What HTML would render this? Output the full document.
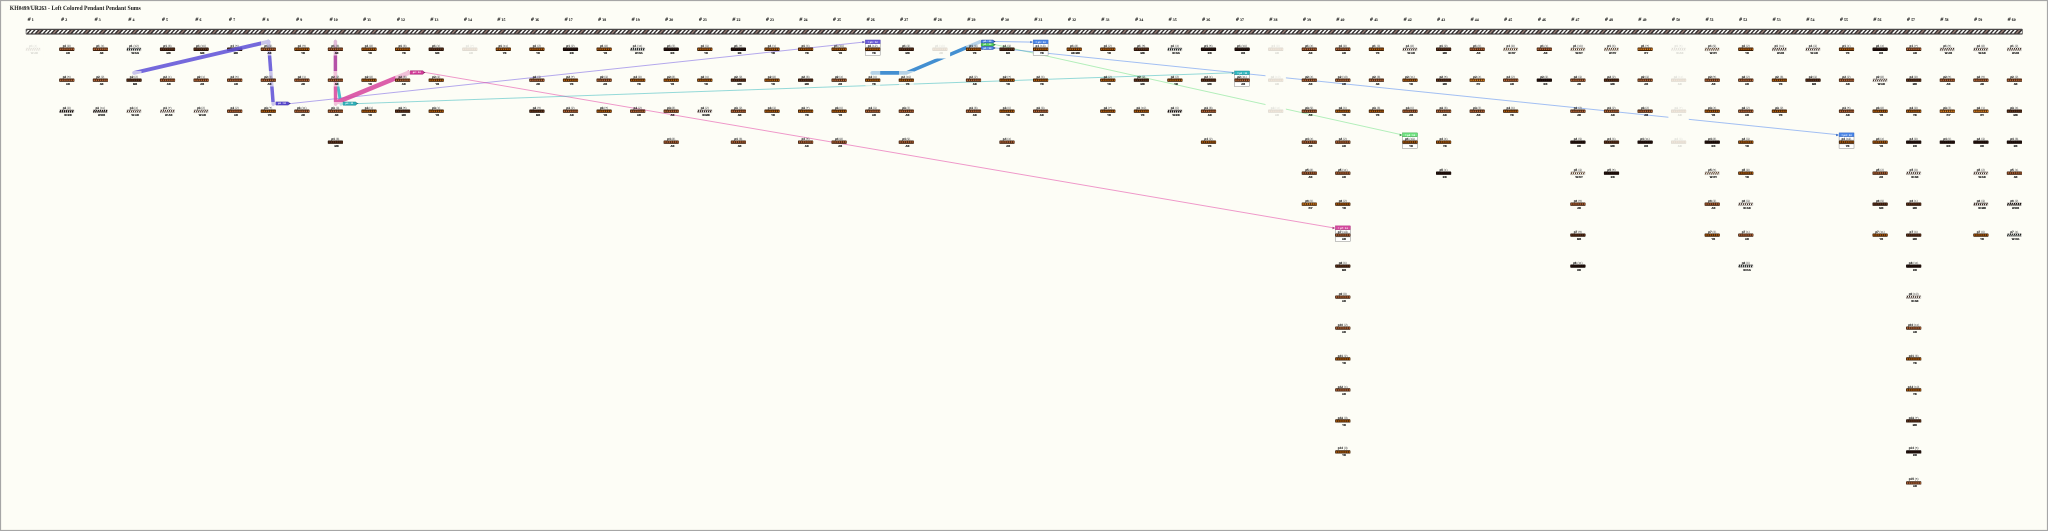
<!DOCTYPE html>
<html lang="en"><head><meta charset="utf-8"><title>KH0499/UR263 - Left Colored Pendant Pendant Sums</title>
<style>html,body{margin:0;padding:0;background:#fdfdf6}body{width:2048px;height:531px;overflow:hidden;position:relative}svg{position:absolute;left:0;top:0;display:block;opacity:.999;will-change:transform;text-rendering:geometricPrecision}text{font-family:"Liberation Sans",sans-serif}.ti{font-family:"Liberation Serif",serif;font-weight:bold;font-size:6.5px;fill:#151515}.cn{font-family:"Liberation Serif",serif;font-weight:bold;font-style:italic;font-size:5.4px;fill:#161616;stroke:#161616;stroke-width:.09}.t{font-size:3.05px;font-weight:bold;fill:#1a1a1a;stroke:#1a1a1a;stroke-width:.07;text-anchor:middle}.t tspan{font-weight:normal;fill:#666;stroke:#666;stroke-width:.06}.n{font-size:2.7px;font-weight:bold;fill:#000;stroke:#000;stroke-width:.12;text-anchor:middle}.h{font-size:2.5px;font-weight:bold;fill:#fff;text-anchor:middle}.b{stroke:#2a1408;stroke-width:.55}.s{stroke:#555;stroke-width:.25}.k{fill:#fdfdf6;fill-opacity:.62}</style></head><body>
<svg width="2048" height="531" viewBox="0 0 2048 531">
<rect x="0" y="0" width="2048" height="531" fill="#fdfdf6"/>
<rect x="0.5" y="0.5" width="2047" height="530" fill="none" stroke="#a6a6a6" stroke-width="1.2"/>
<text class="ti" x="9.8" y="9.9" textLength="131" lengthAdjust="spacingAndGlyphs">KH<tspan font-size="5.9">0499</tspan>/UR<tspan font-size="5.9">263</tspan> - Left Colored Pendant Pendant Sums</text>
<text class="cn" x="27.7" y="21.3"># <tspan font-size="3.9" font-style="normal" stroke-width=".05">1</tspan></text>
<text class="cn" x="61.3" y="21.3"># <tspan font-size="3.9" font-style="normal" stroke-width=".05">2</tspan></text>
<text class="cn" x="94.8" y="21.3"># <tspan font-size="3.9" font-style="normal" stroke-width=".05">3</tspan></text>
<text class="cn" x="128.4" y="21.3"># <tspan font-size="3.9" font-style="normal" stroke-width=".05">4</tspan></text>
<text class="cn" x="161.9" y="21.3"># <tspan font-size="3.9" font-style="normal" stroke-width=".05">5</tspan></text>
<text class="cn" x="195.5" y="21.3"># <tspan font-size="3.9" font-style="normal" stroke-width=".05">6</tspan></text>
<text class="cn" x="229.1" y="21.3"># <tspan font-size="3.9" font-style="normal" stroke-width=".05">7</tspan></text>
<text class="cn" x="262.6" y="21.3"># <tspan font-size="3.9" font-style="normal" stroke-width=".05">8</tspan></text>
<text class="cn" x="296.2" y="21.3"># <tspan font-size="3.9" font-style="normal" stroke-width=".05">9</tspan></text>
<text class="cn" x="329.7" y="21.3"># <tspan font-size="3.9" font-style="normal" stroke-width=".05">10</tspan></text>
<text class="cn" x="363.3" y="21.3"># <tspan font-size="3.9" font-style="normal" stroke-width=".05">11</tspan></text>
<text class="cn" x="396.9" y="21.3"># <tspan font-size="3.9" font-style="normal" stroke-width=".05">12</tspan></text>
<text class="cn" x="430.4" y="21.3"># <tspan font-size="3.9" font-style="normal" stroke-width=".05">13</tspan></text>
<text class="cn" x="464.0" y="21.3"># <tspan font-size="3.9" font-style="normal" stroke-width=".05">14</tspan></text>
<text class="cn" x="497.5" y="21.3"># <tspan font-size="3.9" font-style="normal" stroke-width=".05">15</tspan></text>
<text class="cn" x="531.1" y="21.3"># <tspan font-size="3.9" font-style="normal" stroke-width=".05">16</tspan></text>
<text class="cn" x="564.7" y="21.3"># <tspan font-size="3.9" font-style="normal" stroke-width=".05">17</tspan></text>
<text class="cn" x="598.2" y="21.3"># <tspan font-size="3.9" font-style="normal" stroke-width=".05">18</tspan></text>
<text class="cn" x="631.8" y="21.3"># <tspan font-size="3.9" font-style="normal" stroke-width=".05">19</tspan></text>
<text class="cn" x="665.3" y="21.3"># <tspan font-size="3.9" font-style="normal" stroke-width=".05">20</tspan></text>
<text class="cn" x="698.9" y="21.3"># <tspan font-size="3.9" font-style="normal" stroke-width=".05">21</tspan></text>
<text class="cn" x="732.5" y="21.3"># <tspan font-size="3.9" font-style="normal" stroke-width=".05">22</tspan></text>
<text class="cn" x="766.0" y="21.3"># <tspan font-size="3.9" font-style="normal" stroke-width=".05">23</tspan></text>
<text class="cn" x="799.6" y="21.3"># <tspan font-size="3.9" font-style="normal" stroke-width=".05">24</tspan></text>
<text class="cn" x="833.1" y="21.3"># <tspan font-size="3.9" font-style="normal" stroke-width=".05">25</tspan></text>
<text class="cn" x="866.7" y="21.3"># <tspan font-size="3.9" font-style="normal" stroke-width=".05">26</tspan></text>
<text class="cn" x="900.3" y="21.3"># <tspan font-size="3.9" font-style="normal" stroke-width=".05">27</tspan></text>
<text class="cn" x="933.8" y="21.3"># <tspan font-size="3.9" font-style="normal" stroke-width=".05">28</tspan></text>
<text class="cn" x="967.4" y="21.3"># <tspan font-size="3.9" font-style="normal" stroke-width=".05">29</tspan></text>
<text class="cn" x="1000.9" y="21.3"># <tspan font-size="3.9" font-style="normal" stroke-width=".05">30</tspan></text>
<text class="cn" x="1034.5" y="21.3"># <tspan font-size="3.9" font-style="normal" stroke-width=".05">31</tspan></text>
<text class="cn" x="1068.1" y="21.3"># <tspan font-size="3.9" font-style="normal" stroke-width=".05">32</tspan></text>
<text class="cn" x="1101.6" y="21.3"># <tspan font-size="3.9" font-style="normal" stroke-width=".05">33</tspan></text>
<text class="cn" x="1135.2" y="21.3"># <tspan font-size="3.9" font-style="normal" stroke-width=".05">34</tspan></text>
<text class="cn" x="1168.7" y="21.3"># <tspan font-size="3.9" font-style="normal" stroke-width=".05">35</tspan></text>
<text class="cn" x="1202.3" y="21.3"># <tspan font-size="3.9" font-style="normal" stroke-width=".05">36</tspan></text>
<text class="cn" x="1235.9" y="21.3"># <tspan font-size="3.9" font-style="normal" stroke-width=".05">37</tspan></text>
<text class="cn" x="1269.4" y="21.3"># <tspan font-size="3.9" font-style="normal" stroke-width=".05">38</tspan></text>
<text class="cn" x="1303.0" y="21.3"># <tspan font-size="3.9" font-style="normal" stroke-width=".05">39</tspan></text>
<text class="cn" x="1336.5" y="21.3"># <tspan font-size="3.9" font-style="normal" stroke-width=".05">40</tspan></text>
<text class="cn" x="1370.1" y="21.3"># <tspan font-size="3.9" font-style="normal" stroke-width=".05">41</tspan></text>
<text class="cn" x="1403.7" y="21.3"># <tspan font-size="3.9" font-style="normal" stroke-width=".05">42</tspan></text>
<text class="cn" x="1437.2" y="21.3"># <tspan font-size="3.9" font-style="normal" stroke-width=".05">43</tspan></text>
<text class="cn" x="1470.8" y="21.3"># <tspan font-size="3.9" font-style="normal" stroke-width=".05">44</tspan></text>
<text class="cn" x="1504.3" y="21.3"># <tspan font-size="3.9" font-style="normal" stroke-width=".05">45</tspan></text>
<text class="cn" x="1537.9" y="21.3"># <tspan font-size="3.9" font-style="normal" stroke-width=".05">46</tspan></text>
<text class="cn" x="1571.5" y="21.3"># <tspan font-size="3.9" font-style="normal" stroke-width=".05">47</tspan></text>
<text class="cn" x="1605.0" y="21.3"># <tspan font-size="3.9" font-style="normal" stroke-width=".05">48</tspan></text>
<text class="cn" x="1638.6" y="21.3"># <tspan font-size="3.9" font-style="normal" stroke-width=".05">49</tspan></text>
<text class="cn" x="1672.1" y="21.3"># <tspan font-size="3.9" font-style="normal" stroke-width=".05">50</tspan></text>
<text class="cn" x="1705.7" y="21.3"># <tspan font-size="3.9" font-style="normal" stroke-width=".05">51</tspan></text>
<text class="cn" x="1739.3" y="21.3"># <tspan font-size="3.9" font-style="normal" stroke-width=".05">52</tspan></text>
<text class="cn" x="1772.8" y="21.3"># <tspan font-size="3.9" font-style="normal" stroke-width=".05">53</tspan></text>
<text class="cn" x="1806.4" y="21.3"># <tspan font-size="3.9" font-style="normal" stroke-width=".05">54</tspan></text>
<text class="cn" x="1839.9" y="21.3"># <tspan font-size="3.9" font-style="normal" stroke-width=".05">55</tspan></text>
<text class="cn" x="1873.5" y="21.3"># <tspan font-size="3.9" font-style="normal" stroke-width=".05">56</tspan></text>
<text class="cn" x="1907.1" y="21.3"># <tspan font-size="3.9" font-style="normal" stroke-width=".05">57</tspan></text>
<text class="cn" x="1940.6" y="21.3"># <tspan font-size="3.9" font-style="normal" stroke-width=".05">58</tspan></text>
<text class="cn" x="1974.2" y="21.3"># <tspan font-size="3.9" font-style="normal" stroke-width=".05">59</tspan></text>
<text class="cn" x="2007.7" y="21.3"># <tspan font-size="3.9" font-style="normal" stroke-width=".05">60</tspan></text>
<defs><clipPath id="rc"><rect x="26.1" y="29.1" width="1996.3" height="5.2" rx="0.4"/></clipPath></defs>
<rect x="26.1" y="29.1" width="1996.3" height="5.2" rx="0.4" fill="#322e2e"/>
<path clip-path="url(#rc)" fill="#fcfcfa" d="M24.4 33.4h2.1l3.3-3.3h-2.1zM28.4 33.4h2.1l3.3-3.3h-2.1zM32.4 33.4h2.1l3.3-3.3h-2.1zM40.4 33.4h2.1l3.3-3.3h-2.1zM44.4 33.4h2.1l3.3-3.3h-2.1zM48.3 33.4h2.1l3.3-3.3h-2.1zM56.3 33.4h2.1l3.3-3.3h-2.1zM60.3 33.4h2.1l3.3-3.3h-2.1zM64.3 33.4h2.1l3.3-3.3h-2.1zM72.3 33.4h2.1l3.3-3.3h-2.1zM76.3 33.4h2.1l3.3-3.3h-2.1zM80.3 33.4h2.1l3.3-3.3h-2.1zM88.2 33.4h2.1l3.3-3.3h-2.1zM92.2 33.4h2.1l3.3-3.3h-2.1zM96.2 33.4h2.1l3.3-3.3h-2.1zM104.2 33.4h2.1l3.3-3.3h-2.1zM108.2 33.4h2.1l3.3-3.3h-2.1zM112.2 33.4h2.1l3.3-3.3h-2.1zM120.2 33.4h2.1l3.3-3.3h-2.1zM124.1 33.4h2.1l3.3-3.3h-2.1zM128.1 33.4h2.1l3.3-3.3h-2.1zM136.1 33.4h2.1l3.3-3.3h-2.1zM140.1 33.4h2.1l3.3-3.3h-2.1zM144.1 33.4h2.1l3.3-3.3h-2.1zM152.1 33.4h2.1l3.3-3.3h-2.1zM156.1 33.4h2.1l3.3-3.3h-2.1zM160.1 33.4h2.1l3.3-3.3h-2.1zM168.0 33.4h2.1l3.3-3.3h-2.1zM172.0 33.4h2.1l3.3-3.3h-2.1zM176.0 33.4h2.1l3.3-3.3h-2.1zM184.0 33.4h2.1l3.3-3.3h-2.1zM188.0 33.4h2.1l3.3-3.3h-2.1zM192.0 33.4h2.1l3.3-3.3h-2.1zM200.0 33.4h2.1l3.3-3.3h-2.1zM204.0 33.4h2.1l3.3-3.3h-2.1zM207.9 33.4h2.1l3.3-3.3h-2.1zM215.9 33.4h2.1l3.3-3.3h-2.1zM219.9 33.4h2.1l3.3-3.3h-2.1zM223.9 33.4h2.1l3.3-3.3h-2.1zM231.9 33.4h2.1l3.3-3.3h-2.1zM235.9 33.4h2.1l3.3-3.3h-2.1zM239.9 33.4h2.1l3.3-3.3h-2.1zM247.8 33.4h2.1l3.3-3.3h-2.1zM251.8 33.4h2.1l3.3-3.3h-2.1zM255.8 33.4h2.1l3.3-3.3h-2.1zM263.8 33.4h2.1l3.3-3.3h-2.1zM267.8 33.4h2.1l3.3-3.3h-2.1zM271.8 33.4h2.1l3.3-3.3h-2.1zM279.8 33.4h2.1l3.3-3.3h-2.1zM283.8 33.4h2.1l3.3-3.3h-2.1zM287.7 33.4h2.1l3.3-3.3h-2.1zM295.7 33.4h2.1l3.3-3.3h-2.1zM299.7 33.4h2.1l3.3-3.3h-2.1zM303.7 33.4h2.1l3.3-3.3h-2.1zM311.7 33.4h2.1l3.3-3.3h-2.1zM315.7 33.4h2.1l3.3-3.3h-2.1zM319.7 33.4h2.1l3.3-3.3h-2.1zM327.6 33.4h2.1l3.3-3.3h-2.1zM331.6 33.4h2.1l3.3-3.3h-2.1zM335.6 33.4h2.1l3.3-3.3h-2.1zM343.6 33.4h2.1l3.3-3.3h-2.1zM347.6 33.4h2.1l3.3-3.3h-2.1zM351.6 33.4h2.1l3.3-3.3h-2.1zM359.6 33.4h2.1l3.3-3.3h-2.1zM363.6 33.4h2.1l3.3-3.3h-2.1zM367.5 33.4h2.1l3.3-3.3h-2.1zM375.5 33.4h2.1l3.3-3.3h-2.1zM379.5 33.4h2.1l3.3-3.3h-2.1zM383.5 33.4h2.1l3.3-3.3h-2.1zM391.5 33.4h2.1l3.3-3.3h-2.1zM395.5 33.4h2.1l3.3-3.3h-2.1zM399.5 33.4h2.1l3.3-3.3h-2.1zM407.4 33.4h2.1l3.3-3.3h-2.1zM411.4 33.4h2.1l3.3-3.3h-2.1zM415.4 33.4h2.1l3.3-3.3h-2.1zM423.4 33.4h2.1l3.3-3.3h-2.1zM427.4 33.4h2.1l3.3-3.3h-2.1zM431.4 33.4h2.1l3.3-3.3h-2.1zM439.4 33.4h2.1l3.3-3.3h-2.1zM443.4 33.4h2.1l3.3-3.3h-2.1zM447.3 33.4h2.1l3.3-3.3h-2.1zM455.3 33.4h2.1l3.3-3.3h-2.1zM459.3 33.4h2.1l3.3-3.3h-2.1zM463.3 33.4h2.1l3.3-3.3h-2.1zM471.3 33.4h2.1l3.3-3.3h-2.1zM475.3 33.4h2.1l3.3-3.3h-2.1zM479.3 33.4h2.1l3.3-3.3h-2.1zM487.2 33.4h2.1l3.3-3.3h-2.1zM491.2 33.4h2.1l3.3-3.3h-2.1zM495.2 33.4h2.1l3.3-3.3h-2.1zM503.2 33.4h2.1l3.3-3.3h-2.1zM507.2 33.4h2.1l3.3-3.3h-2.1zM511.2 33.4h2.1l3.3-3.3h-2.1zM519.2 33.4h2.1l3.3-3.3h-2.1zM523.2 33.4h2.1l3.3-3.3h-2.1zM527.1 33.4h2.1l3.3-3.3h-2.1zM535.1 33.4h2.1l3.3-3.3h-2.1zM539.1 33.4h2.1l3.3-3.3h-2.1zM543.1 33.4h2.1l3.3-3.3h-2.1zM551.1 33.4h2.1l3.3-3.3h-2.1zM555.1 33.4h2.1l3.3-3.3h-2.1zM559.1 33.4h2.1l3.3-3.3h-2.1zM567.0 33.4h2.1l3.3-3.3h-2.1zM571.0 33.4h2.1l3.3-3.3h-2.1zM575.0 33.4h2.1l3.3-3.3h-2.1zM583.0 33.4h2.1l3.3-3.3h-2.1zM587.0 33.4h2.1l3.3-3.3h-2.1zM591.0 33.4h2.1l3.3-3.3h-2.1zM599.0 33.4h2.1l3.3-3.3h-2.1zM603.0 33.4h2.1l3.3-3.3h-2.1zM606.9 33.4h2.1l3.3-3.3h-2.1zM614.9 33.4h2.1l3.3-3.3h-2.1zM618.9 33.4h2.1l3.3-3.3h-2.1zM622.9 33.4h2.1l3.3-3.3h-2.1zM630.9 33.4h2.1l3.3-3.3h-2.1zM634.9 33.4h2.1l3.3-3.3h-2.1zM638.9 33.4h2.1l3.3-3.3h-2.1zM646.8 33.4h2.1l3.3-3.3h-2.1zM650.8 33.4h2.1l3.3-3.3h-2.1zM654.8 33.4h2.1l3.3-3.3h-2.1zM662.8 33.4h2.1l3.3-3.3h-2.1zM666.8 33.4h2.1l3.3-3.3h-2.1zM670.8 33.4h2.1l3.3-3.3h-2.1zM678.8 33.4h2.1l3.3-3.3h-2.1zM682.8 33.4h2.1l3.3-3.3h-2.1zM686.7 33.4h2.1l3.3-3.3h-2.1zM694.7 33.4h2.1l3.3-3.3h-2.1zM698.7 33.4h2.1l3.3-3.3h-2.1zM702.7 33.4h2.1l3.3-3.3h-2.1zM710.7 33.4h2.1l3.3-3.3h-2.1zM714.7 33.4h2.1l3.3-3.3h-2.1zM718.7 33.4h2.1l3.3-3.3h-2.1zM726.6 33.4h2.1l3.3-3.3h-2.1zM730.6 33.4h2.1l3.3-3.3h-2.1zM734.6 33.4h2.1l3.3-3.3h-2.1zM742.6 33.4h2.1l3.3-3.3h-2.1zM746.6 33.4h2.1l3.3-3.3h-2.1zM750.6 33.4h2.1l3.3-3.3h-2.1zM758.6 33.4h2.1l3.3-3.3h-2.1zM762.6 33.4h2.1l3.3-3.3h-2.1zM766.5 33.4h2.1l3.3-3.3h-2.1zM774.5 33.4h2.1l3.3-3.3h-2.1zM778.5 33.4h2.1l3.3-3.3h-2.1zM782.5 33.4h2.1l3.3-3.3h-2.1zM790.5 33.4h2.1l3.3-3.3h-2.1zM794.5 33.4h2.1l3.3-3.3h-2.1zM798.5 33.4h2.1l3.3-3.3h-2.1zM806.4 33.4h2.1l3.3-3.3h-2.1zM810.4 33.4h2.1l3.3-3.3h-2.1zM814.4 33.4h2.1l3.3-3.3h-2.1zM822.4 33.4h2.1l3.3-3.3h-2.1zM826.4 33.4h2.1l3.3-3.3h-2.1zM830.4 33.4h2.1l3.3-3.3h-2.1zM838.4 33.4h2.1l3.3-3.3h-2.1zM842.4 33.4h2.1l3.3-3.3h-2.1zM846.3 33.4h2.1l3.3-3.3h-2.1zM854.3 33.4h2.1l3.3-3.3h-2.1zM858.3 33.4h2.1l3.3-3.3h-2.1zM862.3 33.4h2.1l3.3-3.3h-2.1zM870.3 33.4h2.1l3.3-3.3h-2.1zM874.3 33.4h2.1l3.3-3.3h-2.1zM878.3 33.4h2.1l3.3-3.3h-2.1zM886.2 33.4h2.1l3.3-3.3h-2.1zM890.2 33.4h2.1l3.3-3.3h-2.1zM894.2 33.4h2.1l3.3-3.3h-2.1zM902.2 33.4h2.1l3.3-3.3h-2.1zM906.2 33.4h2.1l3.3-3.3h-2.1zM910.2 33.4h2.1l3.3-3.3h-2.1zM918.2 33.4h2.1l3.3-3.3h-2.1zM922.2 33.4h2.1l3.3-3.3h-2.1zM926.1 33.4h2.1l3.3-3.3h-2.1zM934.1 33.4h2.1l3.3-3.3h-2.1zM938.1 33.4h2.1l3.3-3.3h-2.1zM942.1 33.4h2.1l3.3-3.3h-2.1zM950.1 33.4h2.1l3.3-3.3h-2.1zM954.1 33.4h2.1l3.3-3.3h-2.1zM958.1 33.4h2.1l3.3-3.3h-2.1zM966.0 33.4h2.1l3.3-3.3h-2.1zM970.0 33.4h2.1l3.3-3.3h-2.1zM974.0 33.4h2.1l3.3-3.3h-2.1zM982.0 33.4h2.1l3.3-3.3h-2.1zM986.0 33.4h2.1l3.3-3.3h-2.1zM990.0 33.4h2.1l3.3-3.3h-2.1zM998.0 33.4h2.1l3.3-3.3h-2.1zM1002.0 33.4h2.1l3.3-3.3h-2.1zM1005.9 33.4h2.1l3.3-3.3h-2.1zM1013.9 33.4h2.1l3.3-3.3h-2.1zM1017.9 33.4h2.1l3.3-3.3h-2.1zM1021.9 33.4h2.1l3.3-3.3h-2.1zM1029.9 33.4h2.1l3.3-3.3h-2.1zM1033.9 33.4h2.1l3.3-3.3h-2.1zM1037.9 33.4h2.1l3.3-3.3h-2.1zM1045.8 33.4h2.1l3.3-3.3h-2.1zM1049.8 33.4h2.1l3.3-3.3h-2.1zM1053.8 33.4h2.1l3.3-3.3h-2.1zM1061.8 33.4h2.1l3.3-3.3h-2.1zM1065.8 33.4h2.1l3.3-3.3h-2.1zM1069.8 33.4h2.1l3.3-3.3h-2.1zM1077.8 33.4h2.1l3.3-3.3h-2.1zM1081.8 33.4h2.1l3.3-3.3h-2.1zM1085.7 33.4h2.1l3.3-3.3h-2.1zM1093.7 33.4h2.1l3.3-3.3h-2.1zM1097.7 33.4h2.1l3.3-3.3h-2.1zM1101.7 33.4h2.1l3.3-3.3h-2.1zM1109.7 33.4h2.1l3.3-3.3h-2.1zM1113.7 33.4h2.1l3.3-3.3h-2.1zM1117.7 33.4h2.1l3.3-3.3h-2.1zM1125.6 33.4h2.1l3.3-3.3h-2.1zM1129.6 33.4h2.1l3.3-3.3h-2.1zM1133.6 33.4h2.1l3.3-3.3h-2.1zM1141.6 33.4h2.1l3.3-3.3h-2.1zM1145.6 33.4h2.1l3.3-3.3h-2.1zM1149.6 33.4h2.1l3.3-3.3h-2.1zM1157.6 33.4h2.1l3.3-3.3h-2.1zM1161.6 33.4h2.1l3.3-3.3h-2.1zM1165.5 33.4h2.1l3.3-3.3h-2.1zM1173.5 33.4h2.1l3.3-3.3h-2.1zM1177.5 33.4h2.1l3.3-3.3h-2.1zM1181.5 33.4h2.1l3.3-3.3h-2.1zM1189.5 33.4h2.1l3.3-3.3h-2.1zM1193.5 33.4h2.1l3.3-3.3h-2.1zM1197.5 33.4h2.1l3.3-3.3h-2.1zM1205.4 33.4h2.1l3.3-3.3h-2.1zM1209.4 33.4h2.1l3.3-3.3h-2.1zM1213.4 33.4h2.1l3.3-3.3h-2.1zM1221.4 33.4h2.1l3.3-3.3h-2.1zM1225.4 33.4h2.1l3.3-3.3h-2.1zM1229.4 33.4h2.1l3.3-3.3h-2.1zM1237.4 33.4h2.1l3.3-3.3h-2.1zM1241.4 33.4h2.1l3.3-3.3h-2.1zM1245.3 33.4h2.1l3.3-3.3h-2.1zM1253.3 33.4h2.1l3.3-3.3h-2.1zM1257.3 33.4h2.1l3.3-3.3h-2.1zM1261.3 33.4h2.1l3.3-3.3h-2.1zM1269.3 33.4h2.1l3.3-3.3h-2.1zM1273.3 33.4h2.1l3.3-3.3h-2.1zM1277.3 33.4h2.1l3.3-3.3h-2.1zM1285.2 33.4h2.1l3.3-3.3h-2.1zM1289.2 33.4h2.1l3.3-3.3h-2.1zM1293.2 33.4h2.1l3.3-3.3h-2.1zM1301.2 33.4h2.1l3.3-3.3h-2.1zM1305.2 33.4h2.1l3.3-3.3h-2.1zM1309.2 33.4h2.1l3.3-3.3h-2.1zM1317.2 33.4h2.1l3.3-3.3h-2.1zM1321.2 33.4h2.1l3.3-3.3h-2.1zM1325.1 33.4h2.1l3.3-3.3h-2.1zM1333.1 33.4h2.1l3.3-3.3h-2.1zM1337.1 33.4h2.1l3.3-3.3h-2.1zM1341.1 33.4h2.1l3.3-3.3h-2.1zM1349.1 33.4h2.1l3.3-3.3h-2.1zM1353.1 33.4h2.1l3.3-3.3h-2.1zM1357.1 33.4h2.1l3.3-3.3h-2.1zM1365.0 33.4h2.1l3.3-3.3h-2.1zM1369.0 33.4h2.1l3.3-3.3h-2.1zM1373.0 33.4h2.1l3.3-3.3h-2.1zM1381.0 33.4h2.1l3.3-3.3h-2.1zM1385.0 33.4h2.1l3.3-3.3h-2.1zM1389.0 33.4h2.1l3.3-3.3h-2.1zM1397.0 33.4h2.1l3.3-3.3h-2.1zM1401.0 33.4h2.1l3.3-3.3h-2.1zM1404.9 33.4h2.1l3.3-3.3h-2.1zM1412.9 33.4h2.1l3.3-3.3h-2.1zM1416.9 33.4h2.1l3.3-3.3h-2.1zM1420.9 33.4h2.1l3.3-3.3h-2.1zM1428.9 33.4h2.1l3.3-3.3h-2.1zM1432.9 33.4h2.1l3.3-3.3h-2.1zM1436.9 33.4h2.1l3.3-3.3h-2.1zM1444.8 33.4h2.1l3.3-3.3h-2.1zM1448.8 33.4h2.1l3.3-3.3h-2.1zM1452.8 33.4h2.1l3.3-3.3h-2.1zM1460.8 33.4h2.1l3.3-3.3h-2.1zM1464.8 33.4h2.1l3.3-3.3h-2.1zM1468.8 33.4h2.1l3.3-3.3h-2.1zM1476.8 33.4h2.1l3.3-3.3h-2.1zM1480.8 33.4h2.1l3.3-3.3h-2.1zM1484.7 33.4h2.1l3.3-3.3h-2.1zM1492.7 33.4h2.1l3.3-3.3h-2.1zM1496.7 33.4h2.1l3.3-3.3h-2.1zM1500.7 33.4h2.1l3.3-3.3h-2.1zM1508.7 33.4h2.1l3.3-3.3h-2.1zM1512.7 33.4h2.1l3.3-3.3h-2.1zM1516.7 33.4h2.1l3.3-3.3h-2.1zM1524.6 33.4h2.1l3.3-3.3h-2.1zM1528.6 33.4h2.1l3.3-3.3h-2.1zM1532.6 33.4h2.1l3.3-3.3h-2.1zM1540.6 33.4h2.1l3.3-3.3h-2.1zM1544.6 33.4h2.1l3.3-3.3h-2.1zM1548.6 33.4h2.1l3.3-3.3h-2.1zM1556.6 33.4h2.1l3.3-3.3h-2.1zM1560.6 33.4h2.1l3.3-3.3h-2.1zM1564.5 33.4h2.1l3.3-3.3h-2.1zM1572.5 33.4h2.1l3.3-3.3h-2.1zM1576.5 33.4h2.1l3.3-3.3h-2.1zM1580.5 33.4h2.1l3.3-3.3h-2.1zM1588.5 33.4h2.1l3.3-3.3h-2.1zM1592.5 33.4h2.1l3.3-3.3h-2.1zM1596.5 33.4h2.1l3.3-3.3h-2.1zM1604.4 33.4h2.1l3.3-3.3h-2.1zM1608.4 33.4h2.1l3.3-3.3h-2.1zM1612.4 33.4h2.1l3.3-3.3h-2.1zM1620.4 33.4h2.1l3.3-3.3h-2.1zM1624.4 33.4h2.1l3.3-3.3h-2.1zM1628.4 33.4h2.1l3.3-3.3h-2.1zM1636.4 33.4h2.1l3.3-3.3h-2.1zM1640.4 33.4h2.1l3.3-3.3h-2.1zM1644.3 33.4h2.1l3.3-3.3h-2.1zM1652.3 33.4h2.1l3.3-3.3h-2.1zM1656.3 33.4h2.1l3.3-3.3h-2.1zM1660.3 33.4h2.1l3.3-3.3h-2.1zM1668.3 33.4h2.1l3.3-3.3h-2.1zM1672.3 33.4h2.1l3.3-3.3h-2.1zM1676.3 33.4h2.1l3.3-3.3h-2.1zM1684.2 33.4h2.1l3.3-3.3h-2.1zM1688.2 33.4h2.1l3.3-3.3h-2.1zM1692.2 33.4h2.1l3.3-3.3h-2.1zM1700.2 33.4h2.1l3.3-3.3h-2.1zM1704.2 33.4h2.1l3.3-3.3h-2.1zM1708.2 33.4h2.1l3.3-3.3h-2.1zM1716.2 33.4h2.1l3.3-3.3h-2.1zM1720.2 33.4h2.1l3.3-3.3h-2.1zM1724.1 33.4h2.1l3.3-3.3h-2.1zM1732.1 33.4h2.1l3.3-3.3h-2.1zM1736.1 33.4h2.1l3.3-3.3h-2.1zM1740.1 33.4h2.1l3.3-3.3h-2.1zM1748.1 33.4h2.1l3.3-3.3h-2.1zM1752.1 33.4h2.1l3.3-3.3h-2.1zM1756.1 33.4h2.1l3.3-3.3h-2.1zM1764.0 33.4h2.1l3.3-3.3h-2.1zM1768.0 33.4h2.1l3.3-3.3h-2.1zM1772.0 33.4h2.1l3.3-3.3h-2.1zM1780.0 33.4h2.1l3.3-3.3h-2.1zM1784.0 33.4h2.1l3.3-3.3h-2.1zM1788.0 33.4h2.1l3.3-3.3h-2.1zM1796.0 33.4h2.1l3.3-3.3h-2.1zM1800.0 33.4h2.1l3.3-3.3h-2.1zM1803.9 33.4h2.1l3.3-3.3h-2.1zM1811.9 33.4h2.1l3.3-3.3h-2.1zM1815.9 33.4h2.1l3.3-3.3h-2.1zM1819.9 33.4h2.1l3.3-3.3h-2.1zM1827.9 33.4h2.1l3.3-3.3h-2.1zM1831.9 33.4h2.1l3.3-3.3h-2.1zM1835.9 33.4h2.1l3.3-3.3h-2.1zM1843.8 33.4h2.1l3.3-3.3h-2.1zM1847.8 33.4h2.1l3.3-3.3h-2.1zM1851.8 33.4h2.1l3.3-3.3h-2.1zM1859.8 33.4h2.1l3.3-3.3h-2.1zM1863.8 33.4h2.1l3.3-3.3h-2.1zM1867.8 33.4h2.1l3.3-3.3h-2.1zM1875.8 33.4h2.1l3.3-3.3h-2.1zM1879.8 33.4h2.1l3.3-3.3h-2.1zM1883.7 33.4h2.1l3.3-3.3h-2.1zM1891.7 33.4h2.1l3.3-3.3h-2.1zM1895.7 33.4h2.1l3.3-3.3h-2.1zM1899.7 33.4h2.1l3.3-3.3h-2.1zM1907.7 33.4h2.1l3.3-3.3h-2.1zM1911.7 33.4h2.1l3.3-3.3h-2.1zM1915.7 33.4h2.1l3.3-3.3h-2.1zM1923.6 33.4h2.1l3.3-3.3h-2.1zM1927.6 33.4h2.1l3.3-3.3h-2.1zM1931.6 33.4h2.1l3.3-3.3h-2.1zM1939.6 33.4h2.1l3.3-3.3h-2.1zM1943.6 33.4h2.1l3.3-3.3h-2.1zM1947.6 33.4h2.1l3.3-3.3h-2.1zM1955.6 33.4h2.1l3.3-3.3h-2.1zM1959.6 33.4h2.1l3.3-3.3h-2.1zM1963.5 33.4h2.1l3.3-3.3h-2.1zM1971.5 33.4h2.1l3.3-3.3h-2.1zM1975.5 33.4h2.1l3.3-3.3h-2.1zM1979.5 33.4h2.1l3.3-3.3h-2.1zM1987.5 33.4h2.1l3.3-3.3h-2.1zM1991.5 33.4h2.1l3.3-3.3h-2.1zM1995.5 33.4h2.1l3.3-3.3h-2.1zM2003.4 33.4h2.1l3.3-3.3h-2.1zM2007.4 33.4h2.1l3.3-3.3h-2.1zM2011.4 33.4h2.1l3.3-3.3h-2.1zM2019.4 33.4h2.1l3.3-3.3h-2.1zM2023.4 33.4h2.1l3.3-3.3h-2.1z"/>
<path clip-path="url(#rc)" fill="#a08880" d="M36.4 33.4h1.9l3.3-3.3h-1.9zM52.3 33.4h1.9l3.3-3.3h-1.9zM68.3 33.4h1.9l3.3-3.3h-1.9zM84.2 33.4h1.9l3.3-3.3h-1.9zM100.2 33.4h1.9l3.3-3.3h-1.9zM116.2 33.4h1.9l3.3-3.3h-1.9zM132.1 33.4h1.9l3.3-3.3h-1.9zM148.1 33.4h1.9l3.3-3.3h-1.9zM164.1 33.4h1.9l3.3-3.3h-1.9zM180.0 33.4h1.9l3.3-3.3h-1.9zM196.0 33.4h1.9l3.3-3.3h-1.9zM211.9 33.4h1.9l3.3-3.3h-1.9zM227.9 33.4h1.9l3.3-3.3h-1.9zM243.9 33.4h1.9l3.3-3.3h-1.9zM259.8 33.4h1.9l3.3-3.3h-1.9zM275.8 33.4h1.9l3.3-3.3h-1.9zM291.7 33.4h1.9l3.3-3.3h-1.9zM307.7 33.4h1.9l3.3-3.3h-1.9zM323.7 33.4h1.9l3.3-3.3h-1.9zM339.6 33.4h1.9l3.3-3.3h-1.9zM355.6 33.4h1.9l3.3-3.3h-1.9zM371.5 33.4h1.9l3.3-3.3h-1.9zM387.5 33.4h1.9l3.3-3.3h-1.9zM403.5 33.4h1.9l3.3-3.3h-1.9zM419.4 33.4h1.9l3.3-3.3h-1.9zM435.4 33.4h1.9l3.3-3.3h-1.9zM451.3 33.4h1.9l3.3-3.3h-1.9zM467.3 33.4h1.9l3.3-3.3h-1.9zM483.3 33.4h1.9l3.3-3.3h-1.9zM499.2 33.4h1.9l3.3-3.3h-1.9zM515.2 33.4h1.9l3.3-3.3h-1.9zM531.1 33.4h1.9l3.3-3.3h-1.9zM547.1 33.4h1.9l3.3-3.3h-1.9zM563.1 33.4h1.9l3.3-3.3h-1.9zM579.0 33.4h1.9l3.3-3.3h-1.9zM595.0 33.4h1.9l3.3-3.3h-1.9zM610.9 33.4h1.9l3.3-3.3h-1.9zM626.9 33.4h1.9l3.3-3.3h-1.9zM642.9 33.4h1.9l3.3-3.3h-1.9zM658.8 33.4h1.9l3.3-3.3h-1.9zM674.8 33.4h1.9l3.3-3.3h-1.9zM690.7 33.4h1.9l3.3-3.3h-1.9zM706.7 33.4h1.9l3.3-3.3h-1.9zM722.7 33.4h1.9l3.3-3.3h-1.9zM738.6 33.4h1.9l3.3-3.3h-1.9zM754.6 33.4h1.9l3.3-3.3h-1.9zM770.5 33.4h1.9l3.3-3.3h-1.9zM786.5 33.4h1.9l3.3-3.3h-1.9zM802.5 33.4h1.9l3.3-3.3h-1.9zM818.4 33.4h1.9l3.3-3.3h-1.9zM834.4 33.4h1.9l3.3-3.3h-1.9zM850.3 33.4h1.9l3.3-3.3h-1.9zM866.3 33.4h1.9l3.3-3.3h-1.9zM882.3 33.4h1.9l3.3-3.3h-1.9zM898.2 33.4h1.9l3.3-3.3h-1.9zM914.2 33.4h1.9l3.3-3.3h-1.9zM930.1 33.4h1.9l3.3-3.3h-1.9zM946.1 33.4h1.9l3.3-3.3h-1.9zM962.1 33.4h1.9l3.3-3.3h-1.9zM978.0 33.4h1.9l3.3-3.3h-1.9zM994.0 33.4h1.9l3.3-3.3h-1.9zM1009.9 33.4h1.9l3.3-3.3h-1.9zM1025.9 33.4h1.9l3.3-3.3h-1.9zM1041.9 33.4h1.9l3.3-3.3h-1.9zM1057.8 33.4h1.9l3.3-3.3h-1.9zM1073.8 33.4h1.9l3.3-3.3h-1.9zM1089.7 33.4h1.9l3.3-3.3h-1.9zM1105.7 33.4h1.9l3.3-3.3h-1.9zM1121.7 33.4h1.9l3.3-3.3h-1.9zM1137.6 33.4h1.9l3.3-3.3h-1.9zM1153.6 33.4h1.9l3.3-3.3h-1.9zM1169.5 33.4h1.9l3.3-3.3h-1.9zM1185.5 33.4h1.9l3.3-3.3h-1.9zM1201.5 33.4h1.9l3.3-3.3h-1.9zM1217.4 33.4h1.9l3.3-3.3h-1.9zM1233.4 33.4h1.9l3.3-3.3h-1.9zM1249.3 33.4h1.9l3.3-3.3h-1.9zM1265.3 33.4h1.9l3.3-3.3h-1.9zM1281.3 33.4h1.9l3.3-3.3h-1.9zM1297.2 33.4h1.9l3.3-3.3h-1.9zM1313.2 33.4h1.9l3.3-3.3h-1.9zM1329.1 33.4h1.9l3.3-3.3h-1.9zM1345.1 33.4h1.9l3.3-3.3h-1.9zM1361.1 33.4h1.9l3.3-3.3h-1.9zM1377.0 33.4h1.9l3.3-3.3h-1.9zM1393.0 33.4h1.9l3.3-3.3h-1.9zM1408.9 33.4h1.9l3.3-3.3h-1.9zM1424.9 33.4h1.9l3.3-3.3h-1.9zM1440.9 33.4h1.9l3.3-3.3h-1.9zM1456.8 33.4h1.9l3.3-3.3h-1.9zM1472.8 33.4h1.9l3.3-3.3h-1.9zM1488.7 33.4h1.9l3.3-3.3h-1.9zM1504.7 33.4h1.9l3.3-3.3h-1.9zM1520.7 33.4h1.9l3.3-3.3h-1.9zM1536.6 33.4h1.9l3.3-3.3h-1.9zM1552.6 33.4h1.9l3.3-3.3h-1.9zM1568.5 33.4h1.9l3.3-3.3h-1.9zM1584.5 33.4h1.9l3.3-3.3h-1.9zM1600.5 33.4h1.9l3.3-3.3h-1.9zM1616.4 33.4h1.9l3.3-3.3h-1.9zM1632.4 33.4h1.9l3.3-3.3h-1.9zM1648.3 33.4h1.9l3.3-3.3h-1.9zM1664.3 33.4h1.9l3.3-3.3h-1.9zM1680.3 33.4h1.9l3.3-3.3h-1.9zM1696.2 33.4h1.9l3.3-3.3h-1.9zM1712.2 33.4h1.9l3.3-3.3h-1.9zM1728.1 33.4h1.9l3.3-3.3h-1.9zM1744.1 33.4h1.9l3.3-3.3h-1.9zM1760.1 33.4h1.9l3.3-3.3h-1.9zM1776.0 33.4h1.9l3.3-3.3h-1.9zM1792.0 33.4h1.9l3.3-3.3h-1.9zM1807.9 33.4h1.9l3.3-3.3h-1.9zM1823.9 33.4h1.9l3.3-3.3h-1.9zM1839.9 33.4h1.9l3.3-3.3h-1.9zM1855.8 33.4h1.9l3.3-3.3h-1.9zM1871.8 33.4h1.9l3.3-3.3h-1.9zM1887.7 33.4h1.9l3.3-3.3h-1.9zM1903.7 33.4h1.9l3.3-3.3h-1.9zM1919.7 33.4h1.9l3.3-3.3h-1.9zM1935.6 33.4h1.9l3.3-3.3h-1.9zM1951.6 33.4h1.9l3.3-3.3h-1.9zM1967.5 33.4h1.9l3.3-3.3h-1.9zM1983.5 33.4h1.9l3.3-3.3h-1.9zM1999.5 33.4h1.9l3.3-3.3h-1.9zM2015.4 33.4h1.9l3.3-3.3h-1.9z"/>
<rect x="26.1" y="29.1" width="1996.3" height="5.2" rx="0.4" fill="none" stroke="#6a6868" stroke-width="0.75"/>
<path d="M291.2 103.5 L862.5 42.2" fill="none" stroke="#5a40e0" stroke-width="0.90" stroke-opacity="0.50" stroke-linecap="butt" stroke-linejoin="round"/>
<path d="M425.5 72.5 L1332.5 227.7" fill="none" stroke="#e0309c" stroke-width="0.95" stroke-opacity="0.52" stroke-linecap="butt" stroke-linejoin="round"/>
<path d="M358.0 103.6 L1231.8 72.8" fill="none" stroke="#20b0b8" stroke-width="0.95" stroke-opacity="0.50" stroke-linecap="butt" stroke-linejoin="round"/>
<path d="M996.0 41.5 L1031.0 42.1" fill="none" stroke="#3070f0" stroke-width="0.95" stroke-opacity="0.50" stroke-linecap="butt" stroke-linejoin="round"/>
<path d="M996.0 44.8 L1400.0 134.4" fill="none" stroke="#38d858" stroke-width="0.95" stroke-opacity="0.40" stroke-linecap="butt" stroke-linejoin="round"/>
<path d="M996.0 48.0 L1836.0 134.5" fill="none" stroke="#3070f0" stroke-width="0.95" stroke-opacity="0.47" stroke-linecap="butt" stroke-linejoin="round"/>
<path fill="#40200e" stroke="#40200e" stroke-width="1.2" stroke-linejoin="round" d="M59.8 48.2h14.0v2.1h-14.0zM59.8 79.1h14.0v2.1h-14.0zM93.4 48.2h14.0v2.1h-14.0zM93.4 79.1h14.0v2.1h-14.0zM160.5 79.1h14.0v2.1h-14.0zM194.1 79.1h14.0v2.1h-14.0zM227.7 79.1h14.0v2.1h-14.0zM227.7 110.1h14.0v2.1h-14.0zM294.9 79.1h14.0v2.1h-14.0zM294.9 110.1h14.0v2.1h-14.0zM529.9 79.1h14.0v2.1h-14.0zM563.5 110.1h14.0v2.1h-14.0zM597.1 79.1h14.0v2.1h-14.0zM630.7 110.1h14.0v2.1h-14.0zM664.2 110.1h14.0v2.1h-14.0zM664.2 141.1h14.0v2.1h-14.0zM731.4 110.1h14.0v2.1h-14.0zM731.4 141.1h14.0v2.1h-14.0zM798.6 141.1h14.0v2.1h-14.0zM832.1 79.1h14.0v2.1h-14.0zM832.1 141.1h14.0v2.1h-14.0zM865.7 110.1h14.0v2.1h-14.0zM899.3 110.1h14.0v2.1h-14.0zM899.3 141.1h14.0v2.1h-14.0zM966.5 79.1h14.0v2.1h-14.0zM966.5 110.1h14.0v2.1h-14.0zM1000.0 141.1h14.0v2.1h-14.0zM1033.6 110.1h14.0v2.1h-14.0zM1201.5 110.1h14.0v2.1h-14.0zM1302.3 48.2h14.0v2.1h-14.0zM1302.3 79.1h14.0v2.1h-14.0zM1302.3 110.1h14.0v2.1h-14.0zM1302.3 141.1h14.0v2.1h-14.0zM1302.3 172.1h14.0v2.1h-14.0zM1335.8 48.2h14.0v2.1h-14.0zM1335.8 79.1h14.0v2.1h-14.0zM1335.8 141.1h14.0v2.1h-14.0zM1335.8 172.1h14.0v2.1h-14.0zM1335.8 296.0h14.0v2.1h-14.0zM1335.8 327.0h14.0v2.1h-14.0zM1335.8 388.9h14.0v2.1h-14.0zM1369.4 79.1h14.0v2.1h-14.0zM1403.0 110.1h14.0v2.1h-14.0zM1436.6 110.1h14.0v2.1h-14.0zM1470.2 48.2h14.0v2.1h-14.0zM1470.2 110.1h14.0v2.1h-14.0zM1503.7 79.1h14.0v2.1h-14.0zM1537.3 48.2h14.0v2.1h-14.0zM1570.9 79.1h14.0v2.1h-14.0zM1570.9 110.1h14.0v2.1h-14.0zM1570.9 203.1h14.0v2.1h-14.0zM1604.5 110.1h14.0v2.1h-14.0zM1638.1 79.1h14.0v2.1h-14.0zM1638.1 110.1h14.0v2.1h-14.0zM1705.2 79.1h14.0v2.1h-14.0zM1705.2 203.1h14.0v2.1h-14.0zM1738.8 79.1h14.0v2.1h-14.0zM1738.8 110.1h14.0v2.1h-14.0zM1738.8 234.0h14.0v2.1h-14.0zM1839.5 79.1h14.0v2.1h-14.0zM1839.5 110.1h14.0v2.1h-14.0zM1873.1 172.1h14.0v2.1h-14.0zM1906.7 48.2h14.0v2.1h-14.0zM1906.7 327.0h14.0v2.1h-14.0zM1906.7 481.9h14.0v2.1h-14.0zM1940.3 79.1h14.0v2.1h-14.0zM1973.9 79.1h14.0v2.1h-14.0zM2007.4 79.1h14.0v2.1h-14.0zM2007.4 172.1h14.0v2.1h-14.0z"/>
<path fill="none" stroke="#b66636" stroke-width="1.5" stroke-dasharray="1.35 .77" d="M60.0 49.2h14.1M60.0 80.2h14.1M93.6 49.2h14.1M93.6 80.2h14.1M160.7 80.2h14.1M194.3 80.2h14.1M227.9 80.2h14.1M227.9 111.2h14.1M295.1 80.2h14.1M295.1 111.2h14.1M530.1 80.2h14.1M563.7 111.2h14.1M597.3 80.2h14.1M630.9 111.2h14.1M664.4 111.2h14.1M664.4 142.1h14.1M731.6 111.2h14.1M731.6 142.1h14.1M798.8 142.1h14.1M832.3 80.2h14.1M832.3 142.1h14.1M865.9 111.2h14.1M899.5 111.2h14.1M899.5 142.1h14.1M966.7 80.2h14.1M966.7 111.2h14.1M1000.2 142.1h14.1M1033.8 111.2h14.1M1201.7 111.2h14.1M1302.5 49.2h14.1M1302.5 80.2h14.1M1302.5 111.2h14.1M1302.5 142.1h14.1M1302.5 173.1h14.1M1336.0 49.2h14.1M1336.0 80.2h14.1M1336.0 142.1h14.1M1336.0 173.1h14.1M1336.0 297.0h14.1M1336.0 328.0h14.1M1336.0 390.0h14.1M1369.6 80.2h14.1M1403.2 111.2h14.1M1436.8 111.2h14.1M1470.4 49.2h14.1M1470.4 111.2h14.1M1503.9 80.2h14.1M1537.5 49.2h14.1M1571.1 80.2h14.1M1571.1 111.2h14.1M1571.1 204.1h14.1M1604.7 111.2h14.1M1638.3 80.2h14.1M1638.3 111.2h14.1M1705.4 80.2h14.1M1705.4 204.1h14.1M1739.0 80.2h14.1M1739.0 111.2h14.1M1739.0 235.1h14.1M1839.7 80.2h14.1M1839.7 111.2h14.1M1873.3 173.1h14.1M1906.9 49.2h14.1M1906.9 328.0h14.1M1906.9 482.9h14.1M1940.5 80.2h14.1M1974.1 80.2h14.1M2007.6 80.2h14.1M2007.6 173.1h14.1"/>
<path fill="#3c1e06" stroke="#3c1e06" stroke-width="1.2" stroke-linejoin="round" d="M294.9 48.2h14.0v2.1h-14.0zM362.0 48.2h14.0v2.1h-14.0zM362.0 79.1h14.0v2.1h-14.0zM362.0 110.1h14.0v2.1h-14.0zM395.6 48.2h14.0v2.1h-14.0zM429.2 79.1h14.0v2.1h-14.0zM429.2 110.1h14.0v2.1h-14.0zM496.3 48.2h14.0v2.1h-14.0zM529.9 48.2h14.0v2.1h-14.0zM563.5 79.1h14.0v2.1h-14.0zM597.1 48.2h14.0v2.1h-14.0zM597.1 110.1h14.0v2.1h-14.0zM630.7 79.1h14.0v2.1h-14.0zM664.2 79.1h14.0v2.1h-14.0zM697.8 48.2h14.0v2.1h-14.0zM697.8 79.1h14.0v2.1h-14.0zM765.0 48.2h14.0v2.1h-14.0zM765.0 79.1h14.0v2.1h-14.0zM765.0 110.1h14.0v2.1h-14.0zM798.6 48.2h14.0v2.1h-14.0zM798.6 110.1h14.0v2.1h-14.0zM832.1 48.2h14.0v2.1h-14.0zM832.1 110.1h14.0v2.1h-14.0zM1000.0 79.1h14.0v2.1h-14.0zM1000.0 110.1h14.0v2.1h-14.0zM1033.6 79.1h14.0v2.1h-14.0zM1067.2 48.2h14.0v2.1h-14.0zM1100.8 48.2h14.0v2.1h-14.0zM1100.8 79.1h14.0v2.1h-14.0zM1100.8 110.1h14.0v2.1h-14.0zM1134.4 110.1h14.0v2.1h-14.0zM1167.9 79.1h14.0v2.1h-14.0zM1201.5 141.1h14.0v2.1h-14.0zM1335.8 110.1h14.0v2.1h-14.0zM1335.8 203.1h14.0v2.1h-14.0zM1335.8 357.9h14.0v2.1h-14.0zM1335.8 419.9h14.0v2.1h-14.0zM1335.8 450.9h14.0v2.1h-14.0zM1369.4 48.2h14.0v2.1h-14.0zM1369.4 110.1h14.0v2.1h-14.0zM1403.0 79.1h14.0v2.1h-14.0zM1436.6 141.1h14.0v2.1h-14.0zM1503.7 110.1h14.0v2.1h-14.0zM1705.2 110.1h14.0v2.1h-14.0zM1705.2 234.0h14.0v2.1h-14.0zM1738.8 48.2h14.0v2.1h-14.0zM1738.8 141.1h14.0v2.1h-14.0zM1738.8 172.1h14.0v2.1h-14.0zM1772.4 79.1h14.0v2.1h-14.0zM1772.4 110.1h14.0v2.1h-14.0zM1839.5 48.2h14.0v2.1h-14.0zM1873.1 110.1h14.0v2.1h-14.0zM1873.1 141.1h14.0v2.1h-14.0zM1873.1 234.0h14.0v2.1h-14.0zM1906.7 110.1h14.0v2.1h-14.0zM1906.7 357.9h14.0v2.1h-14.0zM1906.7 388.9h14.0v2.1h-14.0zM1973.9 234.0h14.0v2.1h-14.0z"/>
<path fill="none" stroke="#b45e0a" stroke-width="1.5" stroke-dasharray="1.35 .77" d="M295.1 49.2h14.1M362.2 49.2h14.1M362.2 80.2h14.1M362.2 111.2h14.1M395.8 49.2h14.1M429.4 80.2h14.1M429.4 111.2h14.1M496.5 49.2h14.1M530.1 49.2h14.1M563.7 80.2h14.1M597.3 49.2h14.1M597.3 111.2h14.1M630.9 80.2h14.1M664.4 80.2h14.1M698.0 49.2h14.1M698.0 80.2h14.1M765.2 49.2h14.1M765.2 80.2h14.1M765.2 111.2h14.1M798.8 49.2h14.1M798.8 111.2h14.1M832.3 49.2h14.1M832.3 111.2h14.1M1000.2 80.2h14.1M1000.2 111.2h14.1M1033.8 80.2h14.1M1067.4 49.2h14.1M1101.0 49.2h14.1M1101.0 80.2h14.1M1101.0 111.2h14.1M1134.6 111.2h14.1M1168.1 80.2h14.1M1201.7 142.1h14.1M1336.0 111.2h14.1M1336.0 204.1h14.1M1336.0 359.0h14.1M1336.0 421.0h14.1M1336.0 451.9h14.1M1369.6 49.2h14.1M1369.6 111.2h14.1M1403.2 80.2h14.1M1436.8 142.1h14.1M1503.9 111.2h14.1M1705.4 111.2h14.1M1705.4 235.1h14.1M1739.0 49.2h14.1M1739.0 142.1h14.1M1739.0 173.1h14.1M1772.6 80.2h14.1M1772.6 111.2h14.1M1839.7 49.2h14.1M1873.3 111.2h14.1M1873.3 142.1h14.1M1873.3 235.1h14.1M1906.9 111.2h14.1M1906.9 359.0h14.1M1906.9 390.0h14.1M1974.1 235.1h14.1"/>
<path fill="#2a140a" stroke="#2a140a" stroke-width="1.2" stroke-linejoin="round" d="M160.5 48.2h14.0v2.1h-14.0zM194.1 48.2h14.0v2.1h-14.0zM227.7 48.2h14.0v2.1h-14.0zM328.4 141.1h14.0v2.1h-14.0zM395.6 110.1h14.0v2.1h-14.0zM429.2 48.2h14.0v2.1h-14.0zM529.9 110.1h14.0v2.1h-14.0zM731.4 79.1h14.0v2.1h-14.0zM798.6 79.1h14.0v2.1h-14.0zM899.3 48.2h14.0v2.1h-14.0zM1000.0 48.2h14.0v2.1h-14.0zM1134.4 48.2h14.0v2.1h-14.0zM1134.4 79.1h14.0v2.1h-14.0zM1201.5 79.1h14.0v2.1h-14.0zM1335.8 265.0h14.0v2.1h-14.0zM1436.6 48.2h14.0v2.1h-14.0zM1436.6 79.1h14.0v2.1h-14.0zM1570.9 234.0h14.0v2.1h-14.0zM1604.5 79.1h14.0v2.1h-14.0zM1604.5 141.1h14.0v2.1h-14.0zM1806.0 79.1h14.0v2.1h-14.0zM1873.1 203.1h14.0v2.1h-14.0zM1906.7 79.1h14.0v2.1h-14.0zM1906.7 203.1h14.0v2.1h-14.0zM1906.7 234.0h14.0v2.1h-14.0zM1906.7 419.9h14.0v2.1h-14.0zM2007.4 110.1h14.0v2.1h-14.0z"/>
<path fill="none" stroke="#60341a" stroke-width="1.5" stroke-dasharray="1.35 .77" d="M160.7 49.2h14.1M194.3 49.2h14.1M227.9 49.2h14.1M328.6 142.1h14.1M395.8 111.2h14.1M429.4 49.2h14.1M530.1 111.2h14.1M731.6 80.2h14.1M798.8 80.2h14.1M899.5 49.2h14.1M1000.2 49.2h14.1M1134.6 49.2h14.1M1134.6 80.2h14.1M1201.7 80.2h14.1M1336.0 266.1h14.1M1436.8 49.2h14.1M1436.8 80.2h14.1M1571.1 235.1h14.1M1604.7 80.2h14.1M1604.7 142.1h14.1M1806.2 80.2h14.1M1873.3 204.1h14.1M1906.9 80.2h14.1M1906.9 204.1h14.1M1906.9 235.1h14.1M1906.9 421.0h14.1M2007.6 111.2h14.1"/>
<path fill="#130806" stroke="#130806" stroke-width="1.2" stroke-linejoin="round" d="M563.5 48.2h14.0v2.1h-14.0zM664.2 48.2h14.0v2.1h-14.0zM731.4 48.2h14.0v2.1h-14.0zM1201.5 48.2h14.0v2.1h-14.0zM1235.1 48.2h14.0v2.1h-14.0zM1436.6 172.1h14.0v2.1h-14.0zM1537.3 79.1h14.0v2.1h-14.0zM1570.9 141.1h14.0v2.1h-14.0zM1570.9 265.0h14.0v2.1h-14.0zM1604.5 172.1h14.0v2.1h-14.0zM1638.1 141.1h14.0v2.1h-14.0zM1705.2 141.1h14.0v2.1h-14.0zM1873.1 48.2h14.0v2.1h-14.0zM1906.7 141.1h14.0v2.1h-14.0zM1906.7 265.0h14.0v2.1h-14.0zM1906.7 450.9h14.0v2.1h-14.0zM1940.3 141.1h14.0v2.1h-14.0zM1973.9 141.1h14.0v2.1h-14.0zM2007.4 141.1h14.0v2.1h-14.0z"/>
<path fill="none" stroke="#2a140c" stroke-width="1.5" stroke-dasharray="1.35 .77" d="M563.7 49.2h14.1M664.4 49.2h14.1M731.6 49.2h14.1M1201.7 49.2h14.1M1235.3 49.2h14.1M1436.8 173.1h14.1M1537.5 80.2h14.1M1571.1 142.1h14.1M1571.1 266.1h14.1M1604.7 173.1h14.1M1638.3 142.1h14.1M1705.4 142.1h14.1M1873.3 49.2h14.1M1906.9 142.1h14.1M1906.9 266.1h14.1M1906.9 451.9h14.1M1940.5 142.1h14.1M1974.1 142.1h14.1M2007.6 142.1h14.1"/>
<path fill="#4a2608" stroke="#4a2608" stroke-width="1.2" stroke-linejoin="round" d="M1302.3 203.1h14.0v2.1h-14.0zM1470.2 79.1h14.0v2.1h-14.0zM1638.1 48.2h14.0v2.1h-14.0zM1940.3 110.1h14.0v2.1h-14.0zM1973.9 110.1h14.0v2.1h-14.0z"/>
<path fill="none" stroke="#d8801e" stroke-width="1.5" stroke-dasharray="1.35 .77" d="M1302.5 204.1h14.1M1470.4 80.2h14.1M1638.3 49.2h14.1M1940.5 111.2h14.1M1974.1 111.2h14.1"/>
<path fill="#fcfcf8" stroke="#8a8684" stroke-width=".35" d="M127.0 109.7h14v2.9h-14zM160.5 109.7h14v2.9h-14zM194.1 109.7h14v2.9h-14zM1403.0 47.8h14v2.9h-14zM1738.8 202.7h14v2.9h-14zM1772.4 47.8h14v2.9h-14zM1806.0 47.8h14v2.9h-14zM1873.1 78.7h14v2.9h-14zM1906.7 171.7h14v2.9h-14zM1906.7 295.6h14v2.9h-14zM1940.3 47.8h14v2.9h-14zM1973.9 47.8h14v2.9h-14zM1973.9 171.7h14v2.9h-14zM2007.4 47.8h14v2.9h-14z"/>
<path fill="none" stroke="#3c2a20" stroke-width="1.00" d="M127.1 112.4l1-2.5M129.1 112.4l1-2.5M131.2 112.4l1-2.5M133.2 112.4l1-2.5M135.3 112.4l1-2.5M137.3 112.4l1-2.5M139.4 112.4l1-2.5M160.6 112.4l1-2.5M162.7 112.4l1-2.5M164.7 112.4l1-2.5M166.8 112.4l1-2.5M168.8 112.4l1-2.5M170.9 112.4l1-2.5M172.9 112.4l1-2.5M194.2 112.4l1-2.5M196.3 112.4l1-2.5M198.3 112.4l1-2.5M200.4 112.4l1-2.5M202.4 112.4l1-2.5M204.5 112.4l1-2.5M206.5 112.4l1-2.5M1403.1 50.5l1-2.5M1405.1 50.5l1-2.5M1407.2 50.5l1-2.5M1409.2 50.5l1-2.5M1411.3 50.5l1-2.5M1413.3 50.5l1-2.5M1415.4 50.5l1-2.5M1738.9 205.4l1-2.5M1740.9 205.4l1-2.5M1743.0 205.4l1-2.5M1745.0 205.4l1-2.5M1747.1 205.4l1-2.5M1749.1 205.4l1-2.5M1751.2 205.4l1-2.5M1772.5 50.5l1-2.5M1774.5 50.5l1-2.5M1776.6 50.5l1-2.5M1778.6 50.5l1-2.5M1780.7 50.5l1-2.5M1782.7 50.5l1-2.5M1784.8 50.5l1-2.5M1806.1 50.5l1-2.5M1808.1 50.5l1-2.5M1810.2 50.5l1-2.5M1812.2 50.5l1-2.5M1814.3 50.5l1-2.5M1816.3 50.5l1-2.5M1818.4 50.5l1-2.5M1873.2 81.4l1-2.5M1875.3 81.4l1-2.5M1877.3 81.4l1-2.5M1879.4 81.4l1-2.5M1881.4 81.4l1-2.5M1883.5 81.4l1-2.5M1885.5 81.4l1-2.5M1906.8 174.4l1-2.5M1908.8 174.4l1-2.5M1910.9 174.4l1-2.5M1912.9 174.4l1-2.5M1915.0 174.4l1-2.5M1917.0 174.4l1-2.5M1919.1 174.4l1-2.5M1906.8 298.3l1-2.5M1908.8 298.3l1-2.5M1910.9 298.3l1-2.5M1912.9 298.3l1-2.5M1915.0 298.3l1-2.5M1917.0 298.3l1-2.5M1919.1 298.3l1-2.5M1940.4 50.5l1-2.5M1942.4 50.5l1-2.5M1944.5 50.5l1-2.5M1946.5 50.5l1-2.5M1948.6 50.5l1-2.5M1950.6 50.5l1-2.5M1952.7 50.5l1-2.5M1974.0 50.5l1-2.5M1976.0 50.5l1-2.5M1978.1 50.5l1-2.5M1980.1 50.5l1-2.5M1982.2 50.5l1-2.5M1984.2 50.5l1-2.5M1986.3 50.5l1-2.5M1974.0 174.4l1-2.5M1976.0 174.4l1-2.5M1978.1 174.4l1-2.5M1980.1 174.4l1-2.5M1982.2 174.4l1-2.5M1984.2 174.4l1-2.5M1986.3 174.4l1-2.5M2007.5 50.5l1-2.5M2009.6 50.5l1-2.5M2011.6 50.5l1-2.5M2013.7 50.5l1-2.5M2015.7 50.5l1-2.5M2017.8 50.5l1-2.5M2019.8 50.5l1-2.5"/>
<path fill="#fcfcf8" stroke="#8a8684" stroke-width=".35" d="M59.8 109.7h14v2.9h-14zM93.4 109.7h14v2.9h-14zM1167.9 109.7h14v2.9h-14zM2007.4 202.7h14v2.9h-14z"/>
<path fill="none" stroke="#18110e" stroke-width="1.25" d="M59.9 112.4l1-2.5M61.9 112.4l1-2.5M64.0 112.4l1-2.5M66.0 112.4l1-2.5M68.1 112.4l1-2.5M70.2 112.4l1-2.5M72.2 112.4l1-2.5M93.5 112.4l1-2.5M95.5 112.4l1-2.5M97.6 112.4l1-2.5M99.6 112.4l1-2.5M101.7 112.4l1-2.5M103.7 112.4l1-2.5M105.8 112.4l1-2.5M1168.0 112.4l1-2.5M1170.1 112.4l1-2.5M1172.1 112.4l1-2.5M1174.2 112.4l1-2.5M1176.2 112.4l1-2.5M1178.3 112.4l1-2.5M1180.3 112.4l1-2.5M2007.5 205.4l1-2.5M2009.6 205.4l1-2.5M2011.6 205.4l1-2.5M2013.7 205.4l1-2.5M2015.7 205.4l1-2.5M2017.8 205.4l1-2.5M2019.8 205.4l1-2.5"/>
<path fill="#fcfcf8" stroke="#8a8684" stroke-width=".35" d="M127.0 47.8h14v2.9h-14zM630.7 47.8h14v2.9h-14zM1167.9 47.8h14v2.9h-14zM1738.8 264.6h14v2.9h-14zM2007.4 233.6h14v2.9h-14z"/>
<path fill="none" stroke="#1c201e" stroke-width="1.10" d="M127.1 50.5l1-2.5M129.1 50.5l1-2.5M131.2 50.5l1-2.5M133.2 50.5l1-2.5M135.3 50.5l1-2.5M137.3 50.5l1-2.5M139.4 50.5l1-2.5M630.8 50.5l1-2.5M632.8 50.5l1-2.5M634.9 50.5l1-2.5M636.9 50.5l1-2.5M639.0 50.5l1-2.5M641.0 50.5l1-2.5M643.1 50.5l1-2.5M1168.0 50.5l1-2.5M1170.1 50.5l1-2.5M1172.1 50.5l1-2.5M1174.2 50.5l1-2.5M1176.2 50.5l1-2.5M1178.3 50.5l1-2.5M1180.3 50.5l1-2.5M1738.9 267.3l1-2.5M1740.9 267.3l1-2.5M1743.0 267.3l1-2.5M1745.0 267.3l1-2.5M1747.1 267.3l1-2.5M1749.1 267.3l1-2.5M1751.2 267.3l1-2.5M2007.5 236.3l1-2.5M2009.6 236.3l1-2.5M2011.6 236.3l1-2.5M2013.7 236.3l1-2.5M2015.7 236.3l1-2.5M2017.8 236.3l1-2.5M2019.8 236.3l1-2.5"/>
<path fill="#fcfcf8" stroke="#8a8684" stroke-width=".35" d="M697.8 109.7h14v2.9h-14zM1973.9 202.7h14v2.9h-14z"/>
<path fill="none" stroke="#30201a" stroke-width="1.15" d="M697.9 112.4l1-2.5M700.0 112.4l1-2.5M702.0 112.4l1-2.5M704.1 112.4l1-2.5M706.1 112.4l1-2.5M708.2 112.4l1-2.5M710.2 112.4l1-2.5M1974.0 205.4l1-2.5M1976.0 205.4l1-2.5M1978.1 205.4l1-2.5M1980.1 205.4l1-2.5M1982.2 205.4l1-2.5M1984.2 205.4l1-2.5M1986.3 205.4l1-2.5"/>
<path fill="#fcfcf8" stroke="#8a8684" stroke-width=".35" d="M1503.7 47.8h14v2.9h-14zM1570.9 47.8h14v2.9h-14zM1570.9 171.7h14v2.9h-14zM1604.5 47.8h14v2.9h-14zM1705.2 47.8h14v2.9h-14zM1705.2 171.7h14v2.9h-14z"/>
<path fill="none" stroke="#543820" stroke-width="1.00" d="M1503.8 50.5l1-2.5M1505.9 50.5l1-2.5M1507.9 50.5l1-2.5M1510.0 50.5l1-2.5M1512.0 50.5l1-2.5M1514.1 50.5l1-2.5M1516.1 50.5l1-2.5M1571.0 50.5l1-2.5M1573.0 50.5l1-2.5M1575.1 50.5l1-2.5M1577.1 50.5l1-2.5M1579.2 50.5l1-2.5M1581.2 50.5l1-2.5M1583.3 50.5l1-2.5M1571.0 174.4l1-2.5M1573.0 174.4l1-2.5M1575.1 174.4l1-2.5M1577.1 174.4l1-2.5M1579.2 174.4l1-2.5M1581.2 174.4l1-2.5M1583.3 174.4l1-2.5M1604.6 50.5l1-2.5M1606.6 50.5l1-2.5M1608.7 50.5l1-2.5M1610.7 50.5l1-2.5M1612.8 50.5l1-2.5M1614.8 50.5l1-2.5M1616.9 50.5l1-2.5M1705.3 50.5l1-2.5M1707.4 50.5l1-2.5M1709.4 50.5l1-2.5M1711.5 50.5l1-2.5M1713.5 50.5l1-2.5M1715.6 50.5l1-2.5M1717.6 50.5l1-2.5M1705.3 174.4l1-2.5M1707.4 174.4l1-2.5M1709.4 174.4l1-2.5M1711.5 174.4l1-2.5M1713.5 174.4l1-2.5M1715.6 174.4l1-2.5M1717.6 174.4l1-2.5"/>
<text class="t" x="66.7" y="46.7">p1 <tspan>(8)</tspan></text>
<text class="n" x="68.0" y="53.7">AB</text>
<text class="t" x="66.7" y="77.7">p2 <tspan>(5)</tspan></text>
<text class="n" x="68.0" y="84.7">AB</text>
<text class="t" x="66.7" y="108.7">p3 <tspan>(8)</tspan></text>
<text class="n" x="68.0" y="115.7">W:KB</text>
<text class="t" x="100.3" y="46.7">p1 <tspan>(1)</tspan></text>
<text class="n" x="101.6" y="53.7">AB</text>
<text class="t" x="100.3" y="77.7">p2 <tspan>(2)</tspan></text>
<text class="n" x="101.6" y="84.7">AB</text>
<text class="t" x="100.3" y="108.7">p3 <tspan>(11)</tspan></text>
<text class="n" x="101.6" y="115.7">W:KB</text>
<text class="t" x="133.9" y="46.7">p1 <tspan>(12)</tspan></text>
<text class="n" x="135.2" y="53.7">W:GG</text>
<text class="t" x="133.9" y="108.7">p3 <tspan>(4)</tspan></text>
<text class="n" x="135.2" y="115.7">W:AB</text>
<text class="t" x="167.4" y="46.7">p1 <tspan>(8)</tspan></text>
<text class="n" x="168.7" y="53.7">MB</text>
<text class="t" x="167.4" y="77.7">p2 <tspan>(1)</tspan></text>
<text class="n" x="168.7" y="84.7">AB</text>
<text class="t" x="167.4" y="108.7">p3 <tspan>(7)</tspan></text>
<text class="n" x="168.7" y="115.7">W:AB</text>
<text class="t" x="201.0" y="46.7">p1 <tspan>(10)</tspan></text>
<text class="n" x="202.3" y="53.7">MB</text>
<text class="t" x="201.0" y="77.7">p2 <tspan>(1)</tspan></text>
<text class="n" x="202.3" y="84.7">AB</text>
<text class="t" x="201.0" y="108.7">p3 <tspan>(2)</tspan></text>
<text class="n" x="202.3" y="115.7">W:AB</text>
<text class="t" x="234.6" y="46.7">p1 <tspan>(5)</tspan></text>
<text class="n" x="235.9" y="53.7">MB</text>
<text class="t" x="234.6" y="77.7">p2 <tspan>(5)</tspan></text>
<text class="n" x="235.9" y="84.7">AB</text>
<text class="t" x="234.6" y="108.7">p3 <tspan>(2)</tspan></text>
<text class="n" x="235.9" y="115.7">AB</text>
<text class="t" x="301.8" y="46.7">p1 <tspan>(5)</tspan></text>
<text class="n" x="303.1" y="53.7">YB</text>
<text class="t" x="301.8" y="77.7">p2 <tspan>(1)</tspan></text>
<text class="n" x="303.1" y="84.7">AB</text>
<text class="t" x="301.8" y="108.7">p3 <tspan>(11)</tspan></text>
<text class="n" x="303.1" y="115.7">AB</text>
<text class="t" x="335.3" y="139.6">p4 <tspan>(8)</tspan></text>
<text class="n" x="336.6" y="146.6">MB</text>
<text class="t" x="368.9" y="46.7">p1 <tspan>(8)</tspan></text>
<text class="n" x="370.2" y="53.7">YB</text>
<text class="t" x="368.9" y="77.7">p2 <tspan>(8)</tspan></text>
<text class="n" x="370.2" y="84.7">YB</text>
<text class="t" x="368.9" y="108.7">p3 <tspan>(1)</tspan></text>
<text class="n" x="370.2" y="115.7">YB</text>
<text class="t" x="402.5" y="46.7">p1 <tspan>(8)</tspan></text>
<text class="n" x="403.8" y="53.7">YB</text>
<text class="t" x="402.5" y="108.7">p3 <tspan>(5)</tspan></text>
<text class="n" x="403.8" y="115.7">MB</text>
<text class="t" x="436.1" y="46.7">p1 <tspan>(1)</tspan></text>
<text class="n" x="437.4" y="53.7">MB</text>
<text class="t" x="436.1" y="77.7">p2 <tspan>(3)</tspan></text>
<text class="n" x="437.4" y="84.7">YB</text>
<text class="t" x="436.1" y="108.7">p3 <tspan>(1)</tspan></text>
<text class="n" x="437.4" y="115.7">YB</text>
<text class="t" x="503.2" y="46.7">p1 <tspan>(11)</tspan></text>
<text class="n" x="504.5" y="53.7">YB</text>
<text class="t" x="536.8" y="46.7">p1 <tspan>(2)</tspan></text>
<text class="n" x="538.1" y="53.7">YB</text>
<text class="t" x="536.8" y="77.7">p2 <tspan>(3)</tspan></text>
<text class="n" x="538.1" y="84.7">AB</text>
<text class="t" x="536.8" y="108.7">p3 <tspan>(5)</tspan></text>
<text class="n" x="538.1" y="115.7">MB</text>
<text class="t" x="570.4" y="46.7">p1 <tspan>(2)</tspan></text>
<text class="n" x="571.7" y="53.7">KB</text>
<text class="t" x="570.4" y="77.7">p2 <tspan>(7)</tspan></text>
<text class="n" x="571.7" y="84.7">YB</text>
<text class="t" x="570.4" y="108.7">p3 <tspan>(2)</tspan></text>
<text class="n" x="571.7" y="115.7">AB</text>
<text class="t" x="604.0" y="46.7">p1 <tspan>(8)</tspan></text>
<text class="n" x="605.3" y="53.7">YB</text>
<text class="t" x="604.0" y="77.7">p2 <tspan>(3)</tspan></text>
<text class="n" x="605.3" y="84.7">AB</text>
<text class="t" x="604.0" y="108.7">p3 <tspan>(7)</tspan></text>
<text class="n" x="605.3" y="115.7">YB</text>
<text class="t" x="637.6" y="46.7">p1 <tspan>(11)</tspan></text>
<text class="n" x="638.9" y="53.7">W:GG</text>
<text class="t" x="637.6" y="77.7">p2 <tspan>(8)</tspan></text>
<text class="n" x="638.9" y="84.7">YB</text>
<text class="t" x="637.6" y="108.7">p3 <tspan>(2)</tspan></text>
<text class="n" x="638.9" y="115.7">AB</text>
<text class="t" x="671.1" y="46.7">p1 <tspan>(2)</tspan></text>
<text class="n" x="672.4" y="53.7">KB</text>
<text class="t" x="671.1" y="77.7">p2 <tspan>(8)</tspan></text>
<text class="n" x="672.4" y="84.7">YB</text>
<text class="t" x="671.1" y="108.7">p3 <tspan>(8)</tspan></text>
<text class="n" x="672.4" y="115.7">AB</text>
<text class="t" x="671.1" y="139.6">p4 <tspan>(8)</tspan></text>
<text class="n" x="672.4" y="146.6">AB</text>
<text class="t" x="704.7" y="46.7">p1 <tspan>(3)</tspan></text>
<text class="n" x="706.0" y="53.7">YB</text>
<text class="t" x="704.7" y="77.7">p2 <tspan>(4)</tspan></text>
<text class="n" x="706.0" y="84.7">YB</text>
<text class="t" x="704.7" y="108.7">p3 <tspan>(2)</tspan></text>
<text class="n" x="706.0" y="115.7">W:MB</text>
<text class="t" x="738.3" y="46.7">p1 <tspan>(7)</tspan></text>
<text class="n" x="739.6" y="53.7">KB</text>
<text class="t" x="738.3" y="77.7">p2 <tspan>(9)</tspan></text>
<text class="n" x="739.6" y="84.7">MB</text>
<text class="t" x="738.3" y="108.7">p3 <tspan>(2)</tspan></text>
<text class="n" x="739.6" y="115.7">AB</text>
<text class="t" x="738.3" y="139.6">p4 <tspan>(8)</tspan></text>
<text class="n" x="739.6" y="146.6">AB</text>
<text class="t" x="771.9" y="46.7">p1 <tspan>(1)</tspan></text>
<text class="n" x="773.2" y="53.7">YB</text>
<text class="t" x="771.9" y="77.7">p2 <tspan>(8)</tspan></text>
<text class="n" x="773.2" y="84.7">YB</text>
<text class="t" x="771.9" y="108.7">p3 <tspan>(3)</tspan></text>
<text class="n" x="773.2" y="115.7">YB</text>
<text class="t" x="805.5" y="46.7">p1 <tspan>(6)</tspan></text>
<text class="n" x="806.8" y="53.7">YB</text>
<text class="t" x="805.5" y="77.7">p2 <tspan>(8)</tspan></text>
<text class="n" x="806.8" y="84.7">MB</text>
<text class="t" x="805.5" y="108.7">p3 <tspan>(7)</tspan></text>
<text class="n" x="806.8" y="115.7">YB</text>
<text class="t" x="805.5" y="139.6">p4 <tspan>(5)</tspan></text>
<text class="n" x="806.8" y="146.6">AB</text>
<text class="t" x="839.0" y="46.7">p1 <tspan>(10)</tspan></text>
<text class="n" x="840.3" y="53.7">YB</text>
<text class="t" x="839.0" y="77.7">p2 <tspan>(4)</tspan></text>
<text class="n" x="840.3" y="84.7">AB</text>
<text class="t" x="839.0" y="108.7">p3 <tspan>(6)</tspan></text>
<text class="n" x="840.3" y="115.7">YB</text>
<text class="t" x="839.0" y="139.6">p4 <tspan>(8)</tspan></text>
<text class="n" x="840.3" y="146.6">AB</text>
<text class="t" x="872.6" y="108.7">p3 <tspan>(3)</tspan></text>
<text class="n" x="873.9" y="115.7">AB</text>
<text class="t" x="906.2" y="46.7">p1 <tspan>(3)</tspan></text>
<text class="n" x="907.5" y="53.7">MB</text>
<text class="t" x="906.2" y="108.7">p3 <tspan>(2)</tspan></text>
<text class="n" x="907.5" y="115.7">AB</text>
<text class="t" x="906.2" y="139.6">p4 <tspan>(9)</tspan></text>
<text class="n" x="907.5" y="146.6">AB</text>
<text class="t" x="973.4" y="77.7">p2 <tspan>(2)</tspan></text>
<text class="n" x="974.7" y="84.7">AB</text>
<text class="t" x="973.4" y="108.7">p3 <tspan>(8)</tspan></text>
<text class="n" x="974.7" y="115.7">AB</text>
<text class="t" x="1006.9" y="46.7">p1 <tspan>(3)</tspan></text>
<text class="n" x="1008.2" y="53.7">MB</text>
<text class="t" x="1006.9" y="77.7">p2 <tspan>(7)</tspan></text>
<text class="n" x="1008.2" y="84.7">YB</text>
<text class="t" x="1006.9" y="108.7">p3 <tspan>(6)</tspan></text>
<text class="n" x="1008.2" y="115.7">YB</text>
<text class="t" x="1006.9" y="139.6">p4 <tspan>(4)</tspan></text>
<text class="n" x="1008.2" y="146.6">AB</text>
<text class="t" x="1040.5" y="77.7">p2 <tspan>(6)</tspan></text>
<text class="n" x="1041.8" y="84.7">YB</text>
<text class="t" x="1040.5" y="108.7">p3 <tspan>(3)</tspan></text>
<text class="n" x="1041.8" y="115.7">AB</text>
<text class="t" x="1074.1" y="46.7">p1 <tspan>(8)</tspan></text>
<text class="n" x="1075.4" y="53.7">AB:MB</text>
<text class="t" x="1107.7" y="46.7">p1 <tspan>(2)</tspan></text>
<text class="n" x="1109.0" y="53.7">YB</text>
<text class="t" x="1107.7" y="77.7">p2 <tspan>(2)</tspan></text>
<text class="n" x="1109.0" y="84.7">YB</text>
<text class="t" x="1107.7" y="108.7">p3 <tspan>(7)</tspan></text>
<text class="n" x="1109.0" y="115.7">YB</text>
<text class="t" x="1141.3" y="46.7">p1 <tspan>(5)</tspan></text>
<text class="n" x="1142.6" y="53.7">MB</text>
<text class="t" x="1141.3" y="77.7">p2 <tspan>(2)</tspan></text>
<text class="n" x="1142.6" y="84.7">MB</text>
<text class="t" x="1141.3" y="108.7">p3 <tspan>(10)</tspan></text>
<text class="n" x="1142.6" y="115.7">YB</text>
<text class="t" x="1174.8" y="46.7">p1 <tspan>(4)</tspan></text>
<text class="n" x="1176.1" y="53.7">W:GG</text>
<text class="t" x="1174.8" y="77.7">p2 <tspan>(2)</tspan></text>
<text class="n" x="1176.1" y="84.7">YB</text>
<text class="t" x="1174.8" y="108.7">p3 <tspan>(6)</tspan></text>
<text class="n" x="1176.1" y="115.7">W:KB</text>
<text class="t" x="1208.4" y="46.7">p1 <tspan>(5)</tspan></text>
<text class="n" x="1209.7" y="53.7">KB</text>
<text class="t" x="1208.4" y="77.7">p2 <tspan>(1)</tspan></text>
<text class="n" x="1209.7" y="84.7">MB</text>
<text class="t" x="1208.4" y="108.7">p3 <tspan>(8)</tspan></text>
<text class="n" x="1209.7" y="115.7">AB</text>
<text class="t" x="1208.4" y="139.6">p4 <tspan>(2)</tspan></text>
<text class="n" x="1209.7" y="146.6">YB</text>
<text class="t" x="1242.0" y="46.7">p1 <tspan>(10)</tspan></text>
<text class="n" x="1243.3" y="53.7">KB</text>
<text class="t" x="1309.2" y="46.7">p1 <tspan>(4)</tspan></text>
<text class="n" x="1310.5" y="53.7">AB</text>
<text class="t" x="1309.2" y="77.7">p2 <tspan>(4)</tspan></text>
<text class="n" x="1310.5" y="84.7">AB</text>
<text class="t" x="1309.2" y="108.7">p3 <tspan>(9)</tspan></text>
<text class="n" x="1310.5" y="115.7">AB</text>
<text class="t" x="1309.2" y="139.6">p4 <tspan>(4)</tspan></text>
<text class="n" x="1310.5" y="146.6">AB</text>
<text class="t" x="1309.2" y="170.6">p5 <tspan>(8)</tspan></text>
<text class="n" x="1310.5" y="177.6">AB</text>
<text class="t" x="1309.2" y="201.6">p6 <tspan>(6)</tspan></text>
<text class="n" x="1310.5" y="208.6">OY</text>
<text class="t" x="1342.7" y="46.7">p1 <tspan>(8)</tspan></text>
<text class="n" x="1344.0" y="53.7">AB</text>
<text class="t" x="1342.7" y="77.7">p2 <tspan>(10)</tspan></text>
<text class="n" x="1344.0" y="84.7">AB</text>
<text class="t" x="1342.7" y="108.7">p3 <tspan>(6)</tspan></text>
<text class="n" x="1344.0" y="115.7">YB</text>
<text class="t" x="1342.7" y="139.6">p4 <tspan>(2)</tspan></text>
<text class="n" x="1344.0" y="146.6">AB</text>
<text class="t" x="1342.7" y="170.6">p5 <tspan>(11)</tspan></text>
<text class="n" x="1344.0" y="177.6">AB</text>
<text class="t" x="1342.7" y="201.6">p6 <tspan>(2)</tspan></text>
<text class="n" x="1344.0" y="208.6">YB</text>
<text class="t" x="1342.7" y="263.6">p8 <tspan>(6)</tspan></text>
<text class="n" x="1344.0" y="270.6">MB</text>
<text class="t" x="1342.7" y="294.5">p9 <tspan>(9)</tspan></text>
<text class="n" x="1344.0" y="301.5">AB</text>
<text class="t" x="1342.7" y="325.5">p10 <tspan>(2)</tspan></text>
<text class="n" x="1344.0" y="332.5">AB</text>
<text class="t" x="1342.7" y="356.5">p11 <tspan>(2)</tspan></text>
<text class="n" x="1344.0" y="363.5">YB</text>
<text class="t" x="1342.7" y="387.5">p12 <tspan>(1)</tspan></text>
<text class="n" x="1344.0" y="394.5">AB</text>
<text class="t" x="1342.7" y="418.5">p13 <tspan>(9)</tspan></text>
<text class="n" x="1344.0" y="425.5">YB</text>
<text class="t" x="1342.7" y="449.4">p14 <tspan>(9)</tspan></text>
<text class="n" x="1344.0" y="456.4">YB</text>
<text class="t" x="1376.3" y="46.7">p1 <tspan>(3)</tspan></text>
<text class="n" x="1377.6" y="53.7">YB</text>
<text class="t" x="1376.3" y="77.7">p2 <tspan>(8)</tspan></text>
<text class="n" x="1377.6" y="84.7">AB</text>
<text class="t" x="1376.3" y="108.7">p3 <tspan>(8)</tspan></text>
<text class="n" x="1377.6" y="115.7">YB</text>
<text class="t" x="1409.9" y="46.7">p1 <tspan>(8)</tspan></text>
<text class="n" x="1411.2" y="53.7">W:AB</text>
<text class="t" x="1409.9" y="77.7">p2 <tspan>(11)</tspan></text>
<text class="n" x="1411.2" y="84.7">YB</text>
<text class="t" x="1409.9" y="108.7">p3 <tspan>(6)</tspan></text>
<text class="n" x="1411.2" y="115.7">AB</text>
<text class="t" x="1443.5" y="46.7">p1 <tspan>(9)</tspan></text>
<text class="n" x="1444.8" y="53.7">MB</text>
<text class="t" x="1443.5" y="77.7">p2 <tspan>(5)</tspan></text>
<text class="n" x="1444.8" y="84.7">MB</text>
<text class="t" x="1443.5" y="108.7">p3 <tspan>(8)</tspan></text>
<text class="n" x="1444.8" y="115.7">AB</text>
<text class="t" x="1443.5" y="139.6">p4 <tspan>(4)</tspan></text>
<text class="n" x="1444.8" y="146.6">YB</text>
<text class="t" x="1443.5" y="170.6">p5 <tspan>(1)</tspan></text>
<text class="n" x="1444.8" y="177.6">KB</text>
<text class="t" x="1477.1" y="46.7">p1 <tspan>(6)</tspan></text>
<text class="n" x="1478.4" y="53.7">AB</text>
<text class="t" x="1477.1" y="77.7">p2 <tspan>(4)</tspan></text>
<text class="n" x="1478.4" y="84.7">OY</text>
<text class="t" x="1477.1" y="108.7">p3 <tspan>(2)</tspan></text>
<text class="n" x="1478.4" y="115.7">AB</text>
<text class="t" x="1510.6" y="46.7">p1 <tspan>(8)</tspan></text>
<text class="n" x="1511.9" y="53.7">W:OY</text>
<text class="t" x="1510.6" y="77.7">p2 <tspan>(2)</tspan></text>
<text class="n" x="1511.9" y="84.7">AB</text>
<text class="t" x="1510.6" y="108.7">p3 <tspan>(6)</tspan></text>
<text class="n" x="1511.9" y="115.7">YB</text>
<text class="t" x="1544.2" y="46.7">p1 <tspan>(1)</tspan></text>
<text class="n" x="1545.5" y="53.7">AB</text>
<text class="t" x="1544.2" y="77.7">p2 <tspan>(3)</tspan></text>
<text class="n" x="1545.5" y="84.7">KB</text>
<text class="t" x="1577.8" y="46.7">p1 <tspan>(10)</tspan></text>
<text class="n" x="1579.1" y="53.7">W:OY</text>
<text class="t" x="1577.8" y="77.7">p2 <tspan>(3)</tspan></text>
<text class="n" x="1579.1" y="84.7">AB</text>
<text class="t" x="1577.8" y="108.7">p3 <tspan>(2)</tspan></text>
<text class="n" x="1579.1" y="115.7">AB</text>
<text class="t" x="1577.8" y="139.6">p4 <tspan>(9)</tspan></text>
<text class="n" x="1579.1" y="146.6">KB</text>
<text class="t" x="1577.8" y="170.6">p5 <tspan>(3)</tspan></text>
<text class="n" x="1579.1" y="177.6">W:OY</text>
<text class="t" x="1577.8" y="201.6">p6 <tspan>(5)</tspan></text>
<text class="n" x="1579.1" y="208.6">AB</text>
<text class="t" x="1577.8" y="232.6">p7 <tspan>(5)</tspan></text>
<text class="n" x="1579.1" y="239.6">MB</text>
<text class="t" x="1577.8" y="263.6">p8 <tspan>(11)</tspan></text>
<text class="n" x="1579.1" y="270.6">KB</text>
<text class="t" x="1611.4" y="46.7">p1 <tspan>(6)</tspan></text>
<text class="n" x="1612.7" y="53.7">W:OY</text>
<text class="t" x="1611.4" y="77.7">p2 <tspan>(2)</tspan></text>
<text class="n" x="1612.7" y="84.7">MB</text>
<text class="t" x="1611.4" y="108.7">p3 <tspan>(2)</tspan></text>
<text class="n" x="1612.7" y="115.7">AB</text>
<text class="t" x="1611.4" y="139.6">p4 <tspan>(6)</tspan></text>
<text class="n" x="1612.7" y="146.6">MB</text>
<text class="t" x="1611.4" y="170.6">p5 <tspan>(5)</tspan></text>
<text class="n" x="1612.7" y="177.6">KB</text>
<text class="t" x="1645.0" y="46.7">p1 <tspan>(7)</tspan></text>
<text class="n" x="1646.3" y="53.7">OY</text>
<text class="t" x="1645.0" y="77.7">p2 <tspan>(3)</tspan></text>
<text class="n" x="1646.3" y="84.7">AB</text>
<text class="t" x="1645.0" y="108.7">p3 <tspan>(2)</tspan></text>
<text class="n" x="1646.3" y="115.7">AB</text>
<text class="t" x="1645.0" y="139.6">p4 <tspan>(11)</tspan></text>
<text class="n" x="1646.3" y="146.6">KB</text>
<text class="t" x="1712.1" y="46.7">p1 <tspan>(9)</tspan></text>
<text class="n" x="1713.4" y="53.7">W:OY</text>
<text class="t" x="1712.1" y="77.7">p2 <tspan>(5)</tspan></text>
<text class="n" x="1713.4" y="84.7">AB</text>
<text class="t" x="1712.1" y="108.7">p3 <tspan>(4)</tspan></text>
<text class="n" x="1713.4" y="115.7">YB</text>
<text class="t" x="1712.1" y="139.6">p4 <tspan>(8)</tspan></text>
<text class="n" x="1713.4" y="146.6">KB</text>
<text class="t" x="1712.1" y="170.6">p5 <tspan>(5)</tspan></text>
<text class="n" x="1713.4" y="177.6">W:OY</text>
<text class="t" x="1712.1" y="201.6">p6 <tspan>(3)</tspan></text>
<text class="n" x="1713.4" y="208.6">AB</text>
<text class="t" x="1712.1" y="232.6">p7 <tspan>(2)</tspan></text>
<text class="n" x="1713.4" y="239.6">YB</text>
<text class="t" x="1745.7" y="46.7">p1 <tspan>(2)</tspan></text>
<text class="n" x="1747.0" y="53.7">YB</text>
<text class="t" x="1745.7" y="77.7">p2 <tspan>(2)</tspan></text>
<text class="n" x="1747.0" y="84.7">AB</text>
<text class="t" x="1745.7" y="108.7">p3 <tspan>(2)</tspan></text>
<text class="n" x="1747.0" y="115.7">AB</text>
<text class="t" x="1745.7" y="139.6">p4 <tspan>(3)</tspan></text>
<text class="n" x="1747.0" y="146.6">YB</text>
<text class="t" x="1745.7" y="170.6">p5 <tspan>(8)</tspan></text>
<text class="n" x="1747.0" y="177.6">YB</text>
<text class="t" x="1745.7" y="201.6">p6 <tspan>(3)</tspan></text>
<text class="n" x="1747.0" y="208.6">W:AB</text>
<text class="t" x="1745.7" y="232.6">p7 <tspan>(1)</tspan></text>
<text class="n" x="1747.0" y="239.6">AB</text>
<text class="t" x="1745.7" y="263.6">p8 <tspan>(6)</tspan></text>
<text class="n" x="1747.0" y="270.6">W:GG</text>
<text class="t" x="1779.3" y="46.7">p1 <tspan>(11)</tspan></text>
<text class="n" x="1780.6" y="53.7">W:AB</text>
<text class="t" x="1779.3" y="77.7">p2 <tspan>(8)</tspan></text>
<text class="n" x="1780.6" y="84.7">YB</text>
<text class="t" x="1779.3" y="108.7">p3 <tspan>(2)</tspan></text>
<text class="n" x="1780.6" y="115.7">YB</text>
<text class="t" x="1812.9" y="46.7">p1 <tspan>(3)</tspan></text>
<text class="n" x="1814.2" y="53.7">W:AB</text>
<text class="t" x="1812.9" y="77.7">p2 <tspan>(3)</tspan></text>
<text class="n" x="1814.2" y="84.7">MB</text>
<text class="t" x="1846.4" y="46.7">p1 <tspan>(1)</tspan></text>
<text class="n" x="1847.7" y="53.7">YB</text>
<text class="t" x="1846.4" y="77.7">p2 <tspan>(2)</tspan></text>
<text class="n" x="1847.7" y="84.7">AB</text>
<text class="t" x="1846.4" y="108.7">p3 <tspan>(5)</tspan></text>
<text class="n" x="1847.7" y="115.7">AB</text>
<text class="t" x="1880.0" y="46.7">p1 <tspan>(4)</tspan></text>
<text class="n" x="1881.3" y="53.7">KB</text>
<text class="t" x="1880.0" y="77.7">p2 <tspan>(8)</tspan></text>
<text class="n" x="1881.3" y="84.7">W:AB</text>
<text class="t" x="1880.0" y="108.7">p3 <tspan>(8)</tspan></text>
<text class="n" x="1881.3" y="115.7">YB</text>
<text class="t" x="1880.0" y="139.6">p4 <tspan>(4)</tspan></text>
<text class="n" x="1881.3" y="146.6">YB</text>
<text class="t" x="1880.0" y="170.6">p5 <tspan>(2)</tspan></text>
<text class="n" x="1881.3" y="177.6">AB</text>
<text class="t" x="1880.0" y="201.6">p6 <tspan>(9)</tspan></text>
<text class="n" x="1881.3" y="208.6">MB</text>
<text class="t" x="1880.0" y="232.6">p7 <tspan>(11)</tspan></text>
<text class="n" x="1881.3" y="239.6">YB</text>
<text class="t" x="1913.6" y="46.7">p1 <tspan>(7)</tspan></text>
<text class="n" x="1914.9" y="53.7">AB</text>
<text class="t" x="1913.6" y="77.7">p2 <tspan>(8)</tspan></text>
<text class="n" x="1914.9" y="84.7">MB</text>
<text class="t" x="1913.6" y="108.7">p3 <tspan>(8)</tspan></text>
<text class="n" x="1914.9" y="115.7">YB</text>
<text class="t" x="1913.6" y="139.6">p4 <tspan>(8)</tspan></text>
<text class="n" x="1914.9" y="146.6">KB</text>
<text class="t" x="1913.6" y="170.6">p5 <tspan>(9)</tspan></text>
<text class="n" x="1914.9" y="177.6">W:AB</text>
<text class="t" x="1913.6" y="201.6">p6 <tspan>(1)</tspan></text>
<text class="n" x="1914.9" y="208.6">MB</text>
<text class="t" x="1913.6" y="232.6">p7 <tspan>(6)</tspan></text>
<text class="n" x="1914.9" y="239.6">MB</text>
<text class="t" x="1913.6" y="263.6">p8 <tspan>(11)</tspan></text>
<text class="n" x="1914.9" y="270.6">KB</text>
<text class="t" x="1913.6" y="294.5">p9 <tspan>(10)</tspan></text>
<text class="n" x="1914.9" y="301.5">W:AB</text>
<text class="t" x="1913.6" y="325.5">p10 <tspan>(11)</tspan></text>
<text class="n" x="1914.9" y="332.5">AB</text>
<text class="t" x="1913.6" y="356.5">p11 <tspan>(8)</tspan></text>
<text class="n" x="1914.9" y="363.5">YB</text>
<text class="t" x="1913.6" y="387.5">p12 <tspan>(10)</tspan></text>
<text class="n" x="1914.9" y="394.5">YB</text>
<text class="t" x="1913.6" y="418.5">p13 <tspan>(7)</tspan></text>
<text class="n" x="1914.9" y="425.5">MB</text>
<text class="t" x="1913.6" y="449.4">p14 <tspan>(5)</tspan></text>
<text class="n" x="1914.9" y="456.4">KB</text>
<text class="t" x="1913.6" y="480.4">p15 <tspan>(5)</tspan></text>
<text class="n" x="1914.9" y="487.4">AB</text>
<text class="t" x="1947.2" y="46.7">p1 <tspan>(5)</tspan></text>
<text class="n" x="1948.5" y="53.7">W:AB</text>
<text class="t" x="1947.2" y="77.7">p2 <tspan>(5)</tspan></text>
<text class="n" x="1948.5" y="84.7">AB</text>
<text class="t" x="1947.2" y="108.7">p3 <tspan>(2)</tspan></text>
<text class="n" x="1948.5" y="115.7">OY</text>
<text class="t" x="1947.2" y="139.6">p4 <tspan>(6)</tspan></text>
<text class="n" x="1948.5" y="146.6">KB</text>
<text class="t" x="1980.8" y="46.7">p1 <tspan>(8)</tspan></text>
<text class="n" x="1982.1" y="53.7">W:AB</text>
<text class="t" x="1980.8" y="77.7">p2 <tspan>(5)</tspan></text>
<text class="n" x="1982.1" y="84.7">AB</text>
<text class="t" x="1980.8" y="108.7">p3 <tspan>(1)</tspan></text>
<text class="n" x="1982.1" y="115.7">OY</text>
<text class="t" x="1980.8" y="139.6">p4 <tspan>(3)</tspan></text>
<text class="n" x="1982.1" y="146.6">KB</text>
<text class="t" x="1980.8" y="170.6">p5 <tspan>(2)</tspan></text>
<text class="n" x="1982.1" y="177.6">W:AB</text>
<text class="t" x="1980.8" y="201.6">p6 <tspan>(3)</tspan></text>
<text class="n" x="1982.1" y="208.6">W:MB</text>
<text class="t" x="1980.8" y="232.6">p7 <tspan>(6)</tspan></text>
<text class="n" x="1982.1" y="239.6">YB</text>
<text class="t" x="2014.3" y="46.7">p1 <tspan>(2)</tspan></text>
<text class="n" x="2015.6" y="53.7">W:AB</text>
<text class="t" x="2014.3" y="77.7">p2 <tspan>(2)</tspan></text>
<text class="n" x="2015.6" y="84.7">AB</text>
<text class="t" x="2014.3" y="108.7">p3 <tspan>(4)</tspan></text>
<text class="n" x="2015.6" y="115.7">MB</text>
<text class="t" x="2014.3" y="139.6">p4 <tspan>(8)</tspan></text>
<text class="n" x="2015.6" y="146.6">KB</text>
<text class="t" x="2014.3" y="170.6">p5 <tspan>(1)</tspan></text>
<text class="n" x="2015.6" y="177.6">AB</text>
<text class="t" x="2014.3" y="201.6">p6 <tspan>(2)</tspan></text>
<text class="n" x="2015.6" y="208.6">W:KB</text>
<text class="t" x="2014.3" y="232.6">p7 <tspan>(1)</tspan></text>
<text class="n" x="2015.6" y="239.6">W:GG</text>
<g opacity=".88">
<path d="M134.2 72.8 L268.5 41.7" fill="none" stroke="#6254d8" stroke-width="3.90" stroke-opacity="1.00" stroke-linecap="round" stroke-linejoin="round"/>
<path d="M268.5 41.7 L273.2 104.2" fill="none" stroke="#6254d8" stroke-width="3.50" stroke-opacity="1.00" stroke-linecap="round" stroke-linejoin="round"/>
<path d="M335.5 72.8 L341.0 104.2" fill="none" stroke="#34b8c4" stroke-width="3.00" stroke-opacity="1.00" stroke-linecap="round" stroke-linejoin="round"/>
<path d="M335.4 41.6 L335.4 72.8" fill="none" stroke="#ac3a9e" stroke-width="3.50" stroke-opacity="1.00" stroke-linecap="round" stroke-linejoin="round"/>
<path d="M335.4 72.8 L335.6 104.2" fill="none" stroke="#d84aa0" stroke-width="3.50" stroke-opacity="1.00" stroke-linecap="round" stroke-linejoin="round"/>
<path d="M336.6 102.4 L409.7 72.3" fill="none" stroke="#d84aa0" stroke-width="4.50" stroke-opacity="1.00" stroke-linecap="butt" stroke-linejoin="round"/>
<path d="M872.2 72.9 L906.6 72.9 L981.0 41.4" fill="none" stroke="#2a80cc" stroke-width="3.70" stroke-opacity="1.00" stroke-linecap="butt" stroke-linejoin="round"/>
<circle cx="872.2" cy="72.9" r="1.85" fill="#2a80cc"/>
</g>
<rect x="275.2" y="101.9" width="13.6" height="3.2" rx="0.9" fill="#5a4ad0" stroke="#3a2aa0" stroke-width="0.5"/>
<text class="h" x="282.0" y="104.3">p3 : 12</text>
<path d="M288.8 102.5 l2.4 1.0 l-2.4 1.0z" fill="#3a2aa0"/>
<rect x="409.7" y="70.8" width="13.8" height="3.4" rx="0.9" fill="#d83c9c" stroke="#8a1a60" stroke-width="0.5"/>
<text class="h" x="416.6" y="73.4">p2 : 13</text>
<path d="M423.5 71.5 l2.4 1.0 l-2.4 1.0z" fill="#8a1a60"/>
<rect x="342.4" y="102.0" width="13.9" height="3.2" rx="0.9" fill="#30b4bc" stroke="#157880" stroke-width="0.5"/>
<text class="h" x="349.3" y="104.4">p3 : 11</text>
<path d="M356.3 102.6 l2.4 1.0 l-2.4 1.0z" fill="#157880"/>
<rect x="981.0" y="40.1" width="12.7" height="2.9" rx="0.9" fill="#4a86e8" stroke="#1c3c90" stroke-width="0.5"/>
<text class="h" x="987.4" y="42.2">p1 : 13</text>
<path d="M993.7 40.6 l2.4 1.0 l-2.4 1.0z" fill="#1c3c90"/>
<rect x="981.0" y="43.3" width="12.7" height="2.9" rx="0.9" fill="#4cd05c" stroke="#1c7830" stroke-width="0.5"/>
<text class="h" x="987.4" y="45.4">p1 : 13</text>
<path d="M993.7 43.8 l2.4 1.0 l-2.4 1.0z" fill="#1c7830"/>
<rect x="981.0" y="46.5" width="12.7" height="2.9" rx="0.9" fill="#4a86e8" stroke="#1c3c90" stroke-width="0.5"/>
<text class="h" x="987.4" y="48.6">p1 : 13</text>
<path d="M993.7 47.0 l2.4 1.0 l-2.4 1.0z" fill="#1c3c90"/>
<path class="k" d="M126.7 71.0h14.8v15.5h-14.8zM261.0 40.0h14.8v15.5h-14.8zM261.0 71.0h14.8v15.5h-14.8zM261.0 102.0h14.8v15.5h-14.8zM328.1 40.0h14.8v15.5h-14.8zM328.1 71.0h14.8v15.5h-14.8zM328.1 102.0h14.8v15.5h-14.8zM395.3 71.0h14.8v15.5h-14.8zM865.4 71.0h14.8v15.5h-14.8zM899.0 71.0h14.8v15.5h-14.8zM966.2 40.0h14.8v15.5h-14.8z"/>
<rect x="865.3" y="43.6" width="14.9" height="11.9" fill="#fff" fill-opacity=".9" stroke="#8a8a8a" stroke-width=".5"/>
<path d="M865.3 47.3h14.9M865.3 50.9h14.9" stroke="#9a9a9a" stroke-width=".4"/>
<rect x="865.3" y="40.0" width="14.9" height="3.7" fill="#6a5ad8" stroke="#4a3ab0" stroke-width=".45"/>
<path d="M865.2 42.1 l-2.8 -1.2 v2.4z" fill="#4a3ab0"/>
<text class="h" x="872.7" y="42.7">= p1 : 12</text>
<rect x="1033.2" y="43.6" width="14.9" height="11.9" fill="#fff" fill-opacity=".9" stroke="#8a8a8a" stroke-width=".5"/>
<path d="M1033.2 47.3h14.9M1033.2 50.9h14.9" stroke="#9a9a9a" stroke-width=".4"/>
<rect x="1033.2" y="40.0" width="14.9" height="3.7" fill="#4a86e8" stroke="#2a5fc0" stroke-width=".45"/>
<path d="M1033.1 42.1 l-2.8 -1.2 v2.4z" fill="#2a5fc0"/>
<text class="h" x="1040.6" y="42.7">= p1 : 13</text>
<rect x="1234.7" y="74.6" width="14.9" height="11.9" fill="#fff" fill-opacity=".9" stroke="#8a8a8a" stroke-width=".5"/>
<path d="M1234.7 78.3h14.9M1234.7 81.9h14.9" stroke="#9a9a9a" stroke-width=".4"/>
<rect x="1234.7" y="71.0" width="14.9" height="3.7" fill="#30b8c0" stroke="#1a8a92" stroke-width=".45"/>
<path d="M1234.6 73.1 l-2.8 -1.2 v2.4z" fill="#1a8a92"/>
<text class="h" x="1242.1" y="73.7">= p2 : 11</text>
<rect x="1335.4" y="229.5" width="14.9" height="11.9" fill="#fff" fill-opacity=".9" stroke="#8a8a8a" stroke-width=".5"/>
<path d="M1335.4 233.2h14.9M1335.4 236.8h14.9" stroke="#9a9a9a" stroke-width=".4"/>
<rect x="1335.4" y="225.9" width="14.9" height="3.7" fill="#d84aa0" stroke="#a82a78" stroke-width=".45"/>
<path d="M1335.3 228.0 l-2.8 -1.2 v2.4z" fill="#a82a78"/>
<text class="h" x="1342.8" y="228.6">= p7 : 13</text>
<rect x="1402.6" y="136.5" width="14.9" height="11.9" fill="#fff" fill-opacity=".9" stroke="#8a8a8a" stroke-width=".5"/>
<path d="M1402.6 140.2h14.9M1402.6 143.8h14.9" stroke="#9a9a9a" stroke-width=".4"/>
<rect x="1402.6" y="132.9" width="14.9" height="3.7" fill="#70e482" stroke="#2fa040" stroke-width=".45"/>
<path d="M1402.5 135.0 l-2.8 -1.2 v2.4z" fill="#2fa040"/>
<text class="h" x="1410.0" y="135.6">= p4 : 13</text>
<rect x="1839.1" y="136.5" width="14.9" height="11.9" fill="#fff" fill-opacity=".9" stroke="#8a8a8a" stroke-width=".5"/>
<path d="M1839.1 140.2h14.9M1839.1 143.8h14.9" stroke="#9a9a9a" stroke-width=".4"/>
<rect x="1839.1" y="132.9" width="14.9" height="3.7" fill="#4a86e8" stroke="#2a5fc0" stroke-width=".45"/>
<path d="M1839.0 135.0 l-2.8 -1.2 v2.4z" fill="#2a5fc0"/>
<text class="h" x="1846.5" y="135.6">= p4 : 13</text>
<path fill="#40200e" stroke="#40200e" stroke-width="1.2" stroke-linejoin="round" d="M261.3 48.2h14.0v2.1h-14.0zM261.3 79.1h14.0v2.1h-14.0zM328.4 48.2h14.0v2.1h-14.0zM328.4 79.1h14.0v2.1h-14.0zM328.4 110.1h14.0v2.1h-14.0zM395.6 79.1h14.0v2.1h-14.0zM1235.1 79.1h14.0v2.1h-14.0zM1335.8 234.0h14.0v2.1h-14.0z"/>
<path fill="none" stroke="#b66636" stroke-width="1.5" stroke-dasharray="1.35 .77" d="M261.5 49.2h14.1M261.5 80.2h14.1M328.6 49.2h14.1M328.6 80.2h14.1M328.6 111.2h14.1M395.8 80.2h14.1M1235.3 80.2h14.1M1336.0 235.1h14.1"/>
<path fill="#3c1e06" stroke="#3c1e06" stroke-width="1.2" stroke-linejoin="round" d="M261.3 110.1h14.0v2.1h-14.0zM865.7 48.2h14.0v2.1h-14.0zM865.7 79.1h14.0v2.1h-14.0zM899.3 79.1h14.0v2.1h-14.0zM966.5 48.2h14.0v2.1h-14.0zM1033.6 48.2h14.0v2.1h-14.0zM1403.0 141.1h14.0v2.1h-14.0zM1839.5 141.1h14.0v2.1h-14.0z"/>
<path fill="none" stroke="#b45e0a" stroke-width="1.5" stroke-dasharray="1.35 .77" d="M261.5 111.2h14.1M865.9 49.2h14.1M865.9 80.2h14.1M899.5 80.2h14.1M966.7 49.2h14.1M1033.8 49.2h14.1M1403.2 142.1h14.1M1839.7 142.1h14.1"/>
<path fill="#2a140a" stroke="#2a140a" stroke-width="1.2" stroke-linejoin="round" d="M127.0 79.1h14.0v2.1h-14.0z"/>
<path fill="none" stroke="#60341a" stroke-width="1.5" stroke-dasharray="1.35 .77" d="M127.2 80.2h14.1"/>
<text class="t" x="133.9" y="77.7">p2 <tspan>(2)</tspan></text>
<text class="n" x="135.2" y="84.7">MB</text>
<text class="t" x="268.2" y="46.7">p1 <tspan>(3)</tspan></text>
<text class="n" x="269.5" y="53.7">AB</text>
<text class="t" x="268.2" y="77.7">p2 <tspan>(2)</tspan></text>
<text class="n" x="269.5" y="84.7">AB</text>
<text class="t" x="268.2" y="108.7">p3 <tspan>(7)</tspan></text>
<text class="n" x="269.5" y="115.7">YB</text>
<text class="t" x="335.3" y="46.7">p1 <tspan>(8)</tspan></text>
<text class="n" x="336.6" y="53.7">AB</text>
<text class="t" x="335.3" y="77.7">p2 <tspan>(2)</tspan></text>
<text class="n" x="336.6" y="84.7">AB</text>
<text class="t" x="335.3" y="108.7">p3 <tspan>(3)</tspan></text>
<text class="n" x="336.6" y="115.7">AB</text>
<text class="t" x="402.5" y="77.7">p2 <tspan>(8)</tspan></text>
<text class="n" x="403.8" y="84.7">AB</text>
<text class="t" x="872.6" y="46.7">p1 <tspan>(12)</tspan></text>
<text class="n" x="873.9" y="53.7">YB</text>
<text class="t" x="872.6" y="77.7">p2 <tspan>(4)</tspan></text>
<text class="n" x="873.9" y="84.7">YB</text>
<text class="t" x="906.2" y="77.7">p2 <tspan>(10)</tspan></text>
<text class="n" x="907.5" y="84.7">YB</text>
<text class="t" x="973.4" y="46.7">p1 <tspan>(3)</tspan></text>
<text class="n" x="974.7" y="53.7">YB</text>
<text class="t" x="1040.5" y="46.7">p1 <tspan>(13)</tspan></text>
<text class="n" x="1041.8" y="53.7">YB</text>
<text class="t" x="1242.0" y="77.7">p2 <tspan>(11)</tspan></text>
<text class="n" x="1243.3" y="84.7">AB</text>
<text class="t" x="1342.7" y="232.6">p7 <tspan>(13)</tspan></text>
<text class="n" x="1344.0" y="239.6">AB</text>
<text class="t" x="1409.9" y="139.6">p4 <tspan>(13)</tspan></text>
<text class="n" x="1411.2" y="146.6">YB</text>
<text class="t" x="1846.4" y="139.6">p4 <tspan>(13)</tspan></text>
<text class="n" x="1847.7" y="146.6">YB</text>
<path fill="#fdfdf6" d="M23.0 40.0h20.4v18.4h-20.4zM459.6 40.0h20.4v18.4h-20.4zM929.7 40.0h20.4v18.4h-20.4zM1265.5 40.0h20.4v18.4h-20.4zM1265.5 71.0h20.4v18.4h-20.4zM1265.5 102.0h20.4v18.4h-20.4zM1668.4 40.0h20.4v18.4h-20.4zM1668.4 71.0h20.4v18.4h-20.4zM1668.4 102.0h20.4v18.4h-20.4zM1668.4 132.9h20.4v18.4h-20.4z"/>
<g opacity=".15">
<path fill="#40200e" stroke="#40200e" stroke-width="1.2" stroke-linejoin="round" d="M462.8 48.2h14.0v2.1h-14.0zM932.9 48.2h14.0v2.1h-14.0zM1268.7 48.2h14.0v2.1h-14.0zM1268.7 79.1h14.0v2.1h-14.0zM1268.7 110.1h14.0v2.1h-14.0zM1671.6 79.1h14.0v2.1h-14.0zM1671.6 110.1h14.0v2.1h-14.0zM1671.6 141.1h14.0v2.1h-14.0z"/>
<path fill="none" stroke="#b66636" stroke-width="1.5" stroke-dasharray="1.35 .77" d="M463.0 49.2h14.1M933.1 49.2h14.1M1268.9 49.2h14.1M1268.9 80.2h14.1M1268.9 111.2h14.1M1671.8 80.2h14.1M1671.8 111.2h14.1M1671.8 142.1h14.1"/>
<path fill="#fcfcf8" stroke="#8a8684" stroke-width=".35" d="M26.2 47.8h14v2.9h-14zM1671.6 47.8h14v2.9h-14z"/>
<path fill="none" stroke="#3c2a20" stroke-width="1.00" d="M26.3 50.5l1-2.5M28.4 50.5l1-2.5M30.4 50.5l1-2.5M32.5 50.5l1-2.5M34.5 50.5l1-2.5M36.6 50.5l1-2.5M38.6 50.5l1-2.5M1671.7 50.5l1-2.5M1673.8 50.5l1-2.5M1675.8 50.5l1-2.5M1677.9 50.5l1-2.5M1679.9 50.5l1-2.5M1682.0 50.5l1-2.5M1684.0 50.5l1-2.5"/>
<text class="t" x="33.1" y="46.7">p1 <tspan>(4)</tspan></text>
<text class="n" x="34.4" y="53.7">W:AB</text>
<text class="t" x="469.7" y="46.7">p1 <tspan>(7)</tspan></text>
<text class="n" x="471.0" y="53.7">AB</text>
<text class="t" x="939.8" y="46.7">p1 <tspan>(10)</tspan></text>
<text class="n" x="941.1" y="53.7">AB</text>
<text class="t" x="1275.6" y="46.7">p1 <tspan>(8)</tspan></text>
<text class="n" x="1276.9" y="53.7">AB</text>
<text class="t" x="1275.6" y="77.7">p2 <tspan>(10)</tspan></text>
<text class="n" x="1276.9" y="84.7">AB</text>
<text class="t" x="1275.6" y="108.7">p3 <tspan>(11)</tspan></text>
<text class="n" x="1276.9" y="115.7">AB</text>
<text class="t" x="1678.5" y="46.7">p1 <tspan>(5)</tspan></text>
<text class="n" x="1679.8" y="53.7">W:AB</text>
<text class="t" x="1678.5" y="77.7">p2 <tspan>(11)</tspan></text>
<text class="n" x="1679.8" y="84.7">AB</text>
<text class="t" x="1678.5" y="108.7">p3 <tspan>(7)</tspan></text>
<text class="n" x="1679.8" y="115.7">AB</text>
<text class="t" x="1678.5" y="139.6">p4 <tspan>(3)</tspan></text>
<text class="n" x="1679.8" y="146.6">AB</text>
</g>
</svg></body></html>
